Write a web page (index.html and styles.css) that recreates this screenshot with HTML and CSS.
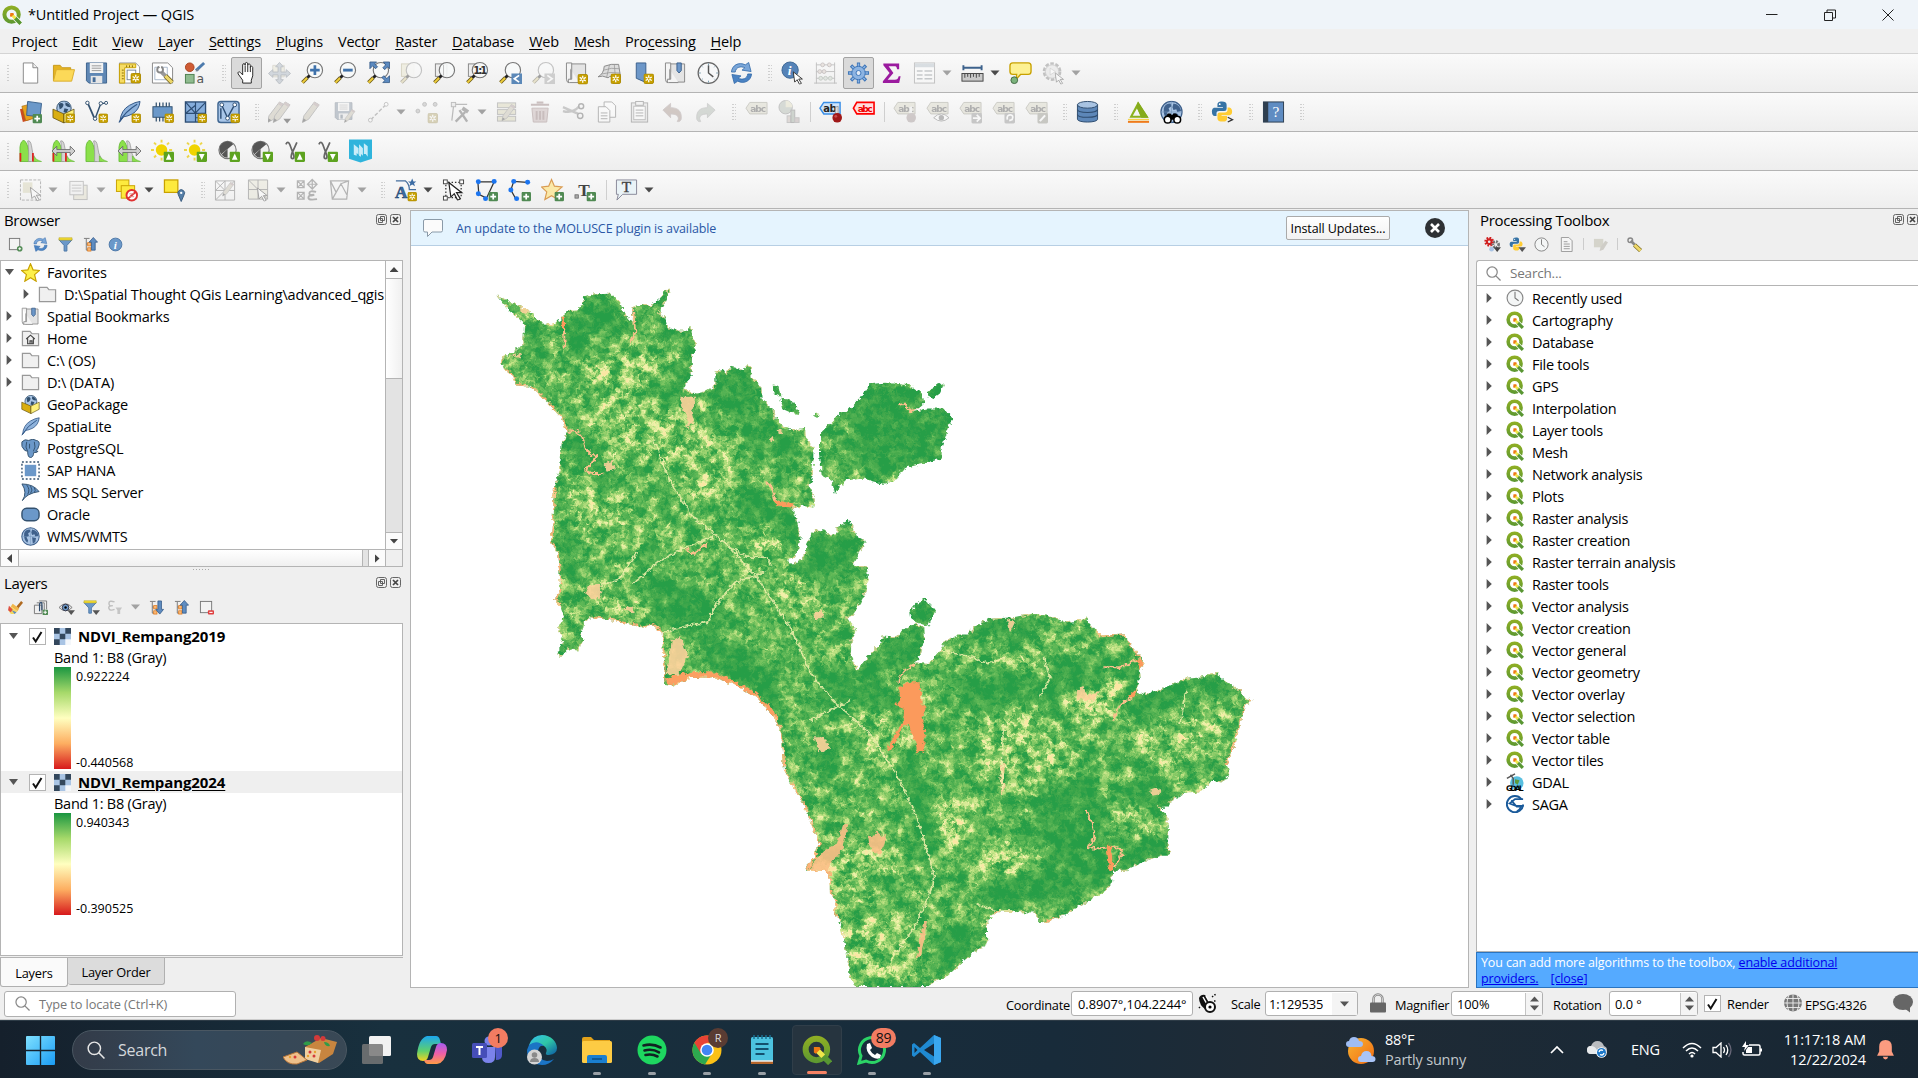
FILE: index.html
```html
<!DOCTYPE html>
<html lang="en">
<head>
<meta charset="utf-8">
<title>*Untitled Project — QGIS</title>
<link rel="stylesheet" href="styles.css">
</head>
<body>
<svg class="grads" aria-hidden="true">
  <defs>
    <linearGradient id="gq" x1="0" y1="0" x2="0" y2="24" gradientUnits="userSpaceOnUse"><stop offset="0" stop-color="#93b023"/><stop offset="1" stop-color="#589632"/></linearGradient>
    <linearGradient id="gwin" x1="0" y1="0" x2="1" y2="1"><stop offset="0" stop-color="#7fe0ff"/><stop offset="1" stop-color="#1a9cf5"/></linearGradient>
    <linearGradient id="gsun" x1="0" y1="0" x2="1" y2="1"><stop offset="0" stop-color="#f7b531"/><stop offset="1" stop-color="#f36a12"/></linearGradient>
    <linearGradient id="gedge" x1="0" y1="0" x2="1" y2="1"><stop offset="0" stop-color="#35c1f1"/><stop offset=".5" stop-color="#2fc7a5"/><stop offset="1" stop-color="#0c59a4"/></linearGradient>
    <linearGradient id="gcopA" x1="0" y1="0" x2="0" y2="1"><stop offset="0" stop-color="#1ca7ee"/><stop offset=".6" stop-color="#5fd06c"/><stop offset="1" stop-color="#f4d21f"/></linearGradient>
    <linearGradient id="gcopB" x1="0" y1="0" x2="0" y2="1"><stop offset="0" stop-color="#a45cf0"/><stop offset=".5" stop-color="#ee5fa8"/><stop offset="1" stop-color="#ff9b45"/></linearGradient>
  </defs>
</svg>
<svg class="defs" aria-hidden="true">
  <!-- small badges -->
  <symbol id="b-new" viewBox="0 0 11 11"><rect x=".5" y=".5" width="10" height="10" rx="1.5" fill="#c8a100" stroke="#ad8b00"/><path d="M5.5 1.8v7.4M2.3 3.6l6.4 3.8M8.7 3.6L2.3 7.4" stroke="#fff" stroke-width="1.3"/><circle cx="5.5" cy="5.5" r="1" fill="#c8a100"/></symbol>
  <symbol id="b-add" viewBox="0 0 10 10"><rect width="10" height="10" rx="1.5" fill="#508a53"/><path d="M5 2v6M2 5h6" stroke="#fff" stroke-width="1.8"/></symbol>
  <symbol id="b-up" viewBox="0 0 11 11"><rect width="11" height="11" rx="1.5" fill="#5da320"/><path d="M5.5 2l3 6.5h-6z" fill="#fff"/></symbol>
  <symbol id="b-dn" viewBox="0 0 11 11"><rect width="11" height="11" rx="1.5" fill="#5da320"/><path d="M5.5 9l3-6.5h-6z" fill="#fff"/></symbol>
  <symbol id="tri" viewBox="0 0 9 6"><path d="M0 .5h9L4.500 5.500z"/></symbol>
  <!-- brand -->
  <symbol id="qgis" viewBox="0 0 24 24"><circle cx="11.500" cy="11.500" r="8.600" fill="none" stroke="url(#gq)" stroke-width="4.800"/><path d="M12 12L23 23" stroke="#fff" stroke-width="6.200"/><path d="M15.500 15.500L22.500 22.500" stroke="#589632" stroke-width="4.400"/><path d="M12.500 12.500L16 16" stroke="#f0e64a" stroke-width="3.600"/><path d="M10 9.500h3.500l1 1.500-3.500 3.500-1.500-1z" fill="#ee7913"/></symbol>
  <symbol id="qgis-dark" viewBox="0 0 24 24"><circle cx="11.500" cy="11.500" r="8.600" fill="none" stroke="url(#gq)" stroke-width="4.800"/><path d="M15.500 15.500L22.500 22.500" stroke="#589632" stroke-width="4.600"/><path d="M12.500 12.500L17 17" stroke="#f0e64a" stroke-width="4.200"/><path d="M9.500 9.500h4.500l1 1.500-4 4-1.500-1z" fill="#ee7913"/></symbol>
  <!-- file toolbar -->
  <symbol id="i-new" viewBox="0 0 24 24"><path d="M4.500 1.500h10l5 5v16h-15z" fill="#fff" stroke="#888"/><path d="M14.500 1.500v5h5" fill="#eee" stroke="#888"/></symbol>
  <symbol id="i-open" viewBox="0 0 24 24"><path d="M1.500 20V4h7l2 2.500h9V10" fill="#e6b422" stroke="#c79a1c"/><path d="M1.500 20.500l3-12h19l-3 12z" fill="#fcd958" stroke="#d9ae2e"/></symbol>
  <symbol id="i-save" viewBox="0 0 24 24"><path d="M1.500 1.500h21v21H4l-2.500-2.500z" fill="#5f87b4" stroke="#3d628c"/><rect x="5" y="1.500" width="14" height="10.500" fill="#f3f3f3"/><path d="M7 4.500h10M7 7h10M7 9.500h10" stroke="#999"/><rect x="6" y="15" width="12" height="7.500" fill="#e6e6e6"/><rect x="8" y="16.500" width="3" height="5" fill="#456c98"/></symbol>
  <symbol id="i-layout" viewBox="0 0 24 24"><path d="M1.500 1.500h17l4 4v17h-21z" fill="#fff" stroke="#999"/><path d="M1.500 2.500h17v4H7v16H1.500z" fill="#f6dc66" stroke="#c8a100"/><path d="M9 4v2M12 4v2M15 4v2M4 9h2M4 12h2M4 15h2M4 18h2" stroke="#8a6d00"/><rect x="9.500" y="9" width="9" height="10" fill="#fff" stroke="#789"/><use href="#b-new" x="13" y="12" width="11" height="11"/></symbol>
  <symbol id="i-laymgr" viewBox="0 0 24 24"><path d="M1.500 1.500h16l5 5v16h-21z" fill="#fff" stroke="#888"/><path d="M4 6h13v13H4z" fill="none" stroke="#a9b8cb"/><path d="M11 11l9 9" stroke="#999" stroke-width="4"/><path d="M15 15l7 7" stroke="#6b5a1a" stroke-width="5"/><path d="M15 15l7 7" stroke="#ecd76b" stroke-width="3.400"/><circle cx="9.500" cy="8.500" r="3" fill="#fff" stroke="#888" stroke-width="2"/><path d="M8 4l2 4 1-4z" fill="#fff"/></symbol>
  <symbol id="i-style" viewBox="0 0 24 24"><circle cx="6" cy="6" r="4.500" fill="#cf5b34" stroke="#a8431f"/><path d="M12.500 9.500L21 1.500" stroke="#4d7bad" stroke-width="3"/><path d="M12 10.500l2-3 1.500 1.500z" fill="#888"/><rect x="1.500" y="13.500" width="9" height="9" fill="#8fbb8f" stroke="#4f8050"/><text x="13" y="22" font-size="13" fill="#555" class="dv">a</text></symbol>
  <symbol id="i-hand" viewBox="0 0 24 24"><path d="M8 22.500v-3L3.300 13c-1-2 1.200-3 2.400-1.500L8 14V3.700c0-2 2.600-2 2.600 0V2.500c0-2 2.700-2 2.700 0V4c0-2 2.700-2 2.700.2V6c.2-1.600 2.500-1.400 2.500.4V15l-1.500 4.500v3z" fill="#fff" stroke="#222"/><path d="M10.600 4v7M13.300 4v7M16 5.500V11" stroke="#222"/></symbol>
  <symbol id="i-panSel" viewBox="0 0 24 24"><path d="M5 4h12v12H5z" fill="#e9e2a9" stroke="#bbb38b"/><path d="M12 1l4 4.500h-2.500V11H19V8.500l4.500 4L19 16.500V14h-5.500v5H16l-4 4.500L8 19h2.500v-5H5v2.500L.5 12.500 5 8.500V11h5.500V5.500H8z" fill="#8fb0d2" stroke="#5d7896" stroke-width="1"/></symbol>
  <symbol id="lens" viewBox="0 0 24 24"><circle cx="14.500" cy="9" r="8" fill="#f7f9fa" fill-opacity=".9" stroke="#777" stroke-width="1.200"/><path d="M9 14.500l-2.500 2.500" stroke="#222" stroke-width="3"/><path d="M6.500 17L1.500 22" stroke="#6e5c16" stroke-width="3.800"/><path d="M6.300 17.200L1.500 22" stroke="#f0cf3c" stroke-width="2"/></symbol>
  <symbol id="i-zin" viewBox="0 0 24 24"><use href="#lens"/><path d="M14.500 4v10M9.500 9h10" stroke="#3f72ab" stroke-width="2.800"/></symbol>
  <symbol id="i-zout" viewBox="0 0 24 24"><use href="#lens"/><path d="M9.500 9h10" stroke="#3f72ab" stroke-width="3"/></symbol>
  <symbol id="i-zfull" viewBox="0 0 24 24"><use href="#lens"/><g fill="#5b8ac0" stroke="#2d5280" stroke-width=".8"><path d="M3 .5h7L8 2.500l3 3L9 7.500 6 4.500l-3 3z"/><path d="M23.500.5v7l-2-2-3 3-2-2 3-3-2.500-3z"/><path d="M23.500 22h-7l2.200-2.200-3.200-3 2-2 3.200 3 2.800-3z"/></g></symbol>
  <symbol id="i-zsel" viewBox="0 0 24 24"><rect x="1.500" y="2.500" width="13" height="13" fill="#efe59a" stroke="#b5a642"/><use href="#lens"/></symbol>
  <symbol id="i-zlay" viewBox="0 0 24 24"><rect x="2.500" y="2.500" width="12" height="13" fill="#eee" stroke="#888"/><use href="#lens"/><path d="M11 3.500v11" stroke="#bbb"/></symbol>
  <symbol id="i-z11" viewBox="0 0 24 24"><rect x="2.500" y="2.500" width="12" height="13" fill="#eee" stroke="#888"/><use href="#lens"/><text x="7.600" y="13" font-size="10.500" font-weight="700" fill="#333" textLength="14" class="dv">1:1</text></symbol>
  <symbol id="i-zlast" viewBox="0 0 24 24"><use href="#lens"/><rect x="13" y="12.500" width="11" height="11" fill="#5b88b8"/><path d="M21 14.500l-5 3.500 5 3.500" fill="none" stroke="#fff" stroke-width="1.800"/></symbol>
  <symbol id="i-znext" viewBox="0 0 24 24"><use href="#lens"/><rect x="13" y="12.500" width="11" height="11" fill="#999"/><path d="M16 14.500l5 3.500-5 3.500" fill="none" stroke="#fff" stroke-width="1.800"/></symbol>
  <symbol id="i-map" viewBox="0 0 24 24"><path d="M6 2.500h15.500v19H6z" fill="#e4e4e4" stroke="#888"/><path d="M1.500 1.500H7v17H3.500v4M1.500 1.500v17q0 3.500 3 3.500H15" fill="#f4f4f4" stroke="#888"/></symbol>
  <symbol id="i-nmap" viewBox="0 0 24 24"><use href="#i-map"/><use href="#b-new" x="13" y="13" width="11" height="11"/></symbol>
  <symbol id="i-n3d" viewBox="0 0 24 24"><path d="M0 16Q6 13 6.500 5q7-3 15-2l2 13q-11-2-13 1-6-3-10.500-1z" fill="#ddd" stroke="#888"/><path d="M6 9q8-3 16-1.500M4 13q8-2.500 19-1M12 3.500l-3 13M17 3l1 12" stroke="#999" fill="none" stroke-width=".8"/><use href="#b-new" x="13" y="12.500" width="11" height="11"/></symbol>
  <symbol id="i-nbook" viewBox="0 0 24 24"><path d="M5.500 1.500h10v21l-2-1.500-8-3.500z" fill="#6d97c8" stroke="#3b608c"/><use href="#b-new" x="13" y="12.500" width="11" height="11"/></symbol>
  <symbol id="i-books" viewBox="0 0 24 24"><use href="#i-map"/><path d="M13.500 1.500h4.500v8l-2.300 2.500-2.200-2.500z" fill="#6d97c8" stroke="#3b608c"/></symbol>
  <symbol id="i-clock" viewBox="0 0 24 24"><circle cx="12" cy="12" r="10.800" fill="#f7f8f9" stroke="#666" stroke-width="1.300"/><path d="M12 4v8l5 4" stroke="#555" fill="none" stroke-width="1.500"/><path d="M12 2v2M12 20v2M2 12h2M20 12h2M5 5l1 1M19 5l-1 1M5 19l1-1M19 19l-1-1" stroke="#79a"/></symbol>
  <symbol id="i-refresh" viewBox="0 0 24 24"><path d="M1.500 11C2 4 9 0 16 3.500L19.500 1l2.500 9.500-9.500-1.500 3-2.500C11 4.500 6 6 5.500 11z" fill="#7aa6d8" stroke="#2f67a8" stroke-width=".8"/><path d="M22.500 13C22 20 15 24 8 20.500L4.500 23 2 13.500l9.500 1.500-3 2.500c4.500 2 9.500.5 10-4.500z" fill="#4b83c3" stroke="#2f67a8" stroke-width=".8"/></symbol>
  <symbol id="arrowcur" viewBox="0 0 12 14"><path d="M.8.8l9.500 7.500H6.500l2.800 4.500-2 1L4.800 9l-2.500 2.500z" fill="#fff" stroke="#222" stroke-width=".9"/></symbol>
  <symbol id="i-ident" viewBox="0 0 24 24"><circle cx="9.500" cy="9" r="8.500" fill="#5583b8" stroke="#3e6794"/><text x="7" y="14.500" font-size="14" font-weight="700" font-style="italic" fill="#fff" class="sf">i</text><use href="#arrowcur" x="12" y="10" width="12" height="14"/></symbol>
  <symbol id="i-abacus" viewBox="0 0 24 24"><path d="M2.500 1v22M21.500 1v22M0 22.500h24M2 3.500h20M2 10.500h20M2 17.500h20" stroke="#777" fill="none"/><g fill="#e6c4ae" stroke="#977"><circle cx="9" cy="3.500" r="2"/><circle cx="16" cy="3.500" r="2"/><circle cx="6" cy="10.500" r="2"/><circle cx="10.500" cy="10.500" r="2"/></g><g fill="#bcd3bb" stroke="#797"><circle cx="7" cy="17.500" r="2"/><circle cx="12" cy="17.500" r="2"/><circle cx="17" cy="17.500" r="2"/></g></symbol>
  <symbol id="i-gear" viewBox="0 0 24 24"><path d="M12 1v22M1 12h22M4.200 4.200l15.600 15.600M19.800 4.200L4.200 19.800" stroke="#3d75b8" stroke-width="3.400"/><path d="M12 2v20M2 12h20M5 5l14 14M19 5L5 19" stroke="#8db4e2" stroke-width="1.600"/><circle cx="12" cy="12" r="7" fill="#8db4e2" stroke="#3d75b8"/><circle cx="12" cy="12" r="2.600" fill="#e4ecf6" stroke="#3d75b8"/></symbol>
  <symbol id="i-sigma" viewBox="0 0 24 24"><path d="M3.500 2h16.500v6h-2.200c-.3-2.500-1-3-3-3H9l5 7-6 7h7.500c2.500 0 3.300-.8 4-3.500h2L20 22.500H3v-2L10 12 3.500 4z" fill="#9b1b9f"/></symbol>
  <symbol id="i-table" viewBox="0 0 24 24"><rect x="1.500" y="1.500" width="21" height="21" fill="#fff" stroke="#777"/><rect x="2" y="2" width="20" height="4" fill="#9fbbd8"/><path d="M4 10h6M12 10h8M4 14h6M12 14h8M4 18h6M12 18h8" stroke="#7a8a99" stroke-width="1.500"/></symbol>
  <symbol id="i-measure" viewBox="0 0 24 24"><path d="M2 6.500h20M2.500 4v5M21.500 4v5" stroke="#3d628c" stroke-width="2"/><rect x="1" y="12.500" width="22" height="8" fill="#c9c9c9" stroke="#444"/><path d="M4 13v4M7 13v3M10 13v4M13 13v3M16 13v4M19 13v3" stroke="#444"/></symbol>
  <symbol id="i-tip" viewBox="0 0 24 24"><path d="M4 1.500h16q3 0 3 3v6q0 3-3 3h-8l-4.500 5 .5-5H4q-3 0-3-3v-6q0-3 3-3z" fill="#fdf193" stroke="#c8a100" stroke-width="1.400"/><circle cx="5.500" cy="19.500" r="3.500" fill="#7bb37d" stroke="#446b45"/></symbol>
  <symbol id="i-action" viewBox="0 0 24 24"><circle cx="10.500" cy="10.500" r="8" fill="none" stroke="#777" stroke-width="3.500" stroke-dasharray="3.500 1.600"/><circle cx="10.500" cy="10.500" r="7" fill="#e0e0e0" stroke="#999"/><path d="M8.500 7v7l5.500-3.500z" fill="#fff" stroke="#888" stroke-width=".6"/><use href="#arrowcur" x="13" y="11" width="11" height="13"/></symbol>
  <!-- data source toolbar -->
  <symbol id="i-dsm" viewBox="0 0 24 24"><path d="M1 9l8-2 3 13-8 2.500z" fill="#cc4a20"/><path d="M3 6l12-3 3 15-11 3z" fill="#e8a21c" stroke="#a86c10" stroke-width=".7"/><path d="M9 1l14.500 2-1.500 14-14-1.500z" fill="#6b98c9" stroke="#3b628e"/><use href="#b-add" x="14" y="14" width="10" height="10"/></symbol>
  <symbol id="i-gpkg0" viewBox="0 0 24 24"><circle cx="12.500" cy="8" r="7.500" fill="#a8c4e4" stroke="#32506f"/><path d="M7 4q3-3 5 0 0 4-4 5zM14 2q5 1 5 5-3 0-5-2zM13 8l4 1-2 4-3-1z" fill="#32506f"/><path d="M1 9l11.500 5v9.500L1 18z" fill="#d9ae10" stroke="#5e4d0c" stroke-width=".8"/><path d="M12.500 14L23 9v9l-10.500 5.500z" fill="#fdf07a" stroke="#5e4d0c" stroke-width=".8"/></symbol>
  <symbol id="i-gpkg" viewBox="0 0 24 24"><use href="#i-gpkg0"/><use href="#b-new" x="14" y="13.500" width="10" height="10"/></symbol>
  <symbol id="i-shp" viewBox="0 0 24 24"><path d="M3 3l7 16" fill="none" stroke="#33516f" stroke-width="1.800"/><path d="M10.500 19l6-16h6" fill="none" stroke="#33516f" stroke-width="1.500"/><g fill="#fff" stroke="#33516f"><circle cx="2.500" cy="2.500" r="1.800"/><circle cx="10.500" cy="19" r="1.800"/><circle cx="16.500" cy="3" r="1.800"/><circle cx="22" cy="2.500" r="1.600"/></g><use href="#b-new" x="14" y="13.500" width="10" height="10"/></symbol>
  <symbol id="i-feather" viewBox="0 0 24 24"><path d="M2 22Q3 10 12 5q6-3.500 11-4-1 9-8 13-5 2.500-9 3z" fill="#8fb3dc" stroke="#2f5585"/><path d="M1 23Q8 11 20 4" stroke="#2f5585" fill="none" stroke-width="1.200"/></symbol>
  <symbol id="i-spl" viewBox="0 0 24 24"><use href="#i-feather"/><use href="#b-new" x="14" y="13.500" width="10" height="10"/></symbol>
  <symbol id="i-mem" viewBox="0 0 24 24"><path d="M5.500 2v20M9 2v20M12.500 2v20M16 2v20M19 2v20" stroke="#33516f" stroke-width="1.300"/><rect x="2" y="6.500" width="20" height="11" fill="#6b98c9" stroke="#33516f"/><use href="#b-new" x="14" y="13.500" width="10" height="10"/></symbol>
  <symbol id="i-mesh" viewBox="0 0 24 24"><rect x="1.500" y="1.500" width="21" height="21" fill="#86addb" stroke="#2d4d73" stroke-width="1.400"/><path d="M1.500 13.500h21M12 1.500v21M1.500 1.500l10.500 12M12 13L22.500 2M1.500 13.500L12 5M12 18h10" stroke="#2d4d73" stroke-width="1.200"/><use href="#b-new" x="14" y="13.500" width="10" height="10"/></symbol>
  <symbol id="i-virt" viewBox="0 0 24 24"><rect x="1" y="1" width="22" height="22" rx="3" fill="#a9c6e8" stroke="#3f6590" stroke-width="1.500"/><path d="M5 5l6 13L18 5M4 19V8" fill="none" stroke="#2d4d73" stroke-width="1.500"/><g fill="#fff" stroke="#2d4d73"><circle cx="5" cy="4.500" r="2"/><circle cx="11" cy="18.500" r="2"/><circle cx="18.500" cy="4.500" r="2"/></g><use href="#b-new" x="14" y="13.500" width="10" height="10"/></symbol>
  <symbol id="pencil" viewBox="0 0 24 24"><path d="M1.500 23l1.500-7L14 1.500l5 3L8 19.500z" fill="#c9b98a" stroke="#777"/><path d="M1.500 23l1-4.500 3 2z" fill="#333"/><path d="M14 1.500l5 3-1.500 2.500-5.200-3.300z" fill="#b88"/></symbol>
  <symbol id="i-pencils" viewBox="0 0 24 24"><use href="#pencil" x="-2"/><use href="#pencil" x="4"/><path d="M16 19h8l-4 5z" fill="#111"/></symbol>
  <symbol id="i-savee" viewBox="0 0 24 24"><use href="#i-save" width="20" height="22"/><use href="#pencil" x="10" y="8" width="15" height="16"/></symbol>
  <symbol id="i-line" viewBox="0 0 24 24"><path d="M4 20L20 4" stroke="#777" stroke-width="1.500" stroke-dasharray="4 2"/><circle cx="3.500" cy="20.500" r="2" fill="#fff" stroke="#777"/><circle cx="20" cy="4" r="2" fill="#fff" stroke="#777"/></symbol>
  <symbol id="i-pts" viewBox="0 0 24 24"><g fill="#aaa" stroke="#777"><circle cx="3" cy="11" r="2"/><circle cx="10" cy="4" r="2"/><circle cx="21" cy="4" r="2"/></g><use href="#b-new" x="13" y="13" width="11" height="11"/></symbol>
  <symbol id="i-vert" viewBox="0 0 24 24"><path d="M4 21L6 4h14" stroke="#666" fill="none" stroke-width="1.300"/><rect x="3.500" y="2" width="4.500" height="4.500" fill="#ddd" stroke="#666"/><path d="M8 22L18 12M12 10l8 12" stroke="#555" stroke-width="2.500"/><path d="M15 8l6 4" stroke="#555" stroke-width="4"/></symbol>
  <symbol id="i-multi" viewBox="0 0 24 24"><g fill="#ddd27c" stroke="#777"><rect x="1.500" y="2.500" width="19" height="5"/><rect x="1.500" y="9.500" width="19" height="5"/><rect x="1.500" y="16.500" width="19" height="5"/></g><use href="#pencil" x="5" y="2" width="19" height="21"/></symbol>
  <symbol id="i-trash" viewBox="0 0 24 24"><path d="M3 8h17l-1.500 14.500h-14z" fill="#d6a3a3" stroke="#a66"/><path d="M2 4.500h19M8 2h7M8 11v9M11.500 11v9M15 11v9" stroke="#a66" stroke-width="2"/></symbol>
  <symbol id="i-cut" viewBox="0 0 24 24"><path d="M1 7l16 7M1 11q10 3 17-5" stroke="#888" stroke-width="2.500" fill="none"/><circle cx="20" cy="6" r="2.600" fill="none" stroke="#555" stroke-width="1.500"/><circle cx="19" cy="16" r="2.800" fill="none" stroke="#555" stroke-width="1.500"/></symbol>
  <symbol id="i-copy" viewBox="0 0 24 24"><path d="M9.500 1.500h8l4 4v12h-12z" fill="#fff" stroke="#555"/><path d="M3.500 6.500h8l4 4v12h-12z" fill="#fff" stroke="#555"/><path d="M6 13h7M6 16h7M6 19h7" stroke="#555"/></symbol>
  <symbol id="i-paste" viewBox="0 0 24 24"><rect x="3.500" y="2.500" width="17" height="20" fill="#ddd" stroke="#555"/><rect x="6" y="6" width="12" height="14" fill="#fff" stroke="#777"/><rect x="8" y="1" width="8" height="4" fill="#eee" stroke="#555"/><path d="M8 10h8M8 13h8M8 16h8" stroke="#555"/></symbol>
  <symbol id="i-undo" viewBox="0 0 24 24"><path d="M2 10l8-7v4.500c8 0 12 4 11 12-1 3-3 2.500-4 2.500 3-5 0-8-7-8v4z" fill="#b9836b" stroke="#a88"/></symbol>
  <symbol id="i-redo" viewBox="0 0 24 24"><path d="M22 10l-8-7v4.500C6 7.500 2 11.500 3 19.500c1 3 3 2.500 4 2.500-3-5 0-8 7-8v4z" fill="#9bb49b" stroke="#999"/></symbol>
  <symbol id="tag" viewBox="0 0 24 24"><path d="M1 8l4-6h18v12H5z" fill="#d8d3a4" stroke="#8f8c6a"/><text x="5.500" y="12" font-size="9.500" font-weight="700" fill="#444" textLength="16" class="dv">abc</text></symbol>
  <symbol id="i-diag" viewBox="0 0 24 24"><circle cx="8" cy="7" r="7" fill="#9db59b" stroke="#777"/><path d="M8 7V0a7 7 0 0 1 7 7z" fill="#e6dc8a"/><rect x="9.500" y="16" width="4" height="7" fill="#d8b0a0" stroke="#888"/><rect x="13.500" y="10" width="4" height="13" fill="#8aaa8a" stroke="#666"/><rect x="17.500" y="18" width="4.500" height="5" fill="#c59a9a" stroke="#888"/></symbol>
  <symbol id="i-tagpin" viewBox="0 0 24 24"><path d="M1 8l4-6h17v12H5z" fill="#cfe4fb" stroke="#3a8ee6" stroke-width="1.500"/><text x="4.500" y="12" font-size="10.500" font-weight="700" fill="#222" class="dv">ab</text><path d="M17 7l3-1v12h-3z" fill="#ddd" stroke="#888" stroke-width=".7"/><circle cx="19" cy="18" r="5" fill="#a01818"/><circle cx="17.500" cy="16.500" r="1.500" fill="#c94a4a"/></symbol>
  <symbol id="i-tagred" viewBox="0 0 24 24"><path d="M1.500 8l3.500-6h18v12H5z" fill="#fdd" stroke="#f00" stroke-width="1.700"/><text x="6" y="12" font-size="9.500" font-weight="700" fill="#e00" textLength="15" class="dv">abc</text></symbol>
  <symbol id="i-tagp" viewBox="0 0 24 24"><use href="#tag"/><path d="M17 7l3-1v12h-3z" fill="#eee"/><circle cx="19" cy="18" r="5" fill="#a88"/></symbol>
  <symbol id="i-tageye" viewBox="0 0 24 24"><use href="#tag"/><path d="M8 18q8-8 16 0-8 7-16 0z" fill="#fff" stroke="#666"/><circle cx="16" cy="18" r="2.800" fill="#666"/></symbol>
  <symbol id="i-tagmv" viewBox="0 0 24 24"><use href="#tag"/><rect x="13" y="13" width="11" height="11" rx="1.500" fill="#888"/><path d="M14.500 18.500h7M18.500 15l3.500 3.500-3.500 3.500" fill="none" stroke="#fff" stroke-width="1.800"/></symbol>
  <symbol id="i-tagrot" viewBox="0 0 24 24"><use href="#tag"/><rect x="13" y="13" width="11" height="11" rx="1.500" fill="#888"/><path d="M16 20q-1-5 3-5t2 5l-3 1" fill="none" stroke="#fff" stroke-width="1.800"/></symbol>
  <symbol id="i-taged" viewBox="0 0 24 24"><use href="#tag"/><rect x="13" y="13" width="11" height="11" rx="1.500" fill="#8a8a70"/><path d="M15.500 21.500l5.500-6" stroke="#fff" stroke-width="2.200"/></symbol>
  <symbol id="i-db" viewBox="0 0 24 24"><path d="M1.500 4.500v15c0 4 21 4 21 0v-15z" fill="#5d87b8" stroke="#2f4c6e"/><ellipse cx="12" cy="4.500" rx="10.500" ry="3.500" fill="#a8c3e2" stroke="#2f4c6e"/><path d="M1.500 9.500c0 4 21 4 21 0M1.500 14.500c0 4 21 4 21 0" fill="none" stroke="#2f4c6e" stroke-width="1.200"/></symbol>
  <symbol id="i-grass" viewBox="0 0 24 24"><path d="M11.500 1L22.500 18H2.500zM10.500 8L6 16h8z" fill="#8ab11d" fill-rule="evenodd"/><path d="M11.500 1L22.500 18H15L10 7z" fill="#85ab1b"/><path d="M1 19.900h22" stroke="#f4d34a" stroke-width="1.500"/><path d="M1 22.300h22" stroke="#ef7a1a" stroke-width="2"/></symbol>
  <symbol id="globe" viewBox="0 0 24 24"><circle cx="12" cy="12" r="11" fill="#a9c4e4" stroke="#3f618c" stroke-width="1.300"/><path d="M4 8q1-5 7-5l1 3-3 2 1 3-3 2 2 4-1 3Q3 16 4 8zM14 3q7 1 8 8l-4 1-1-3-3 1-1-3zM14 13l5 1-1 5-3 2z" fill="#3f618c"/><path d="M1 12h22M12 1v22" stroke="#7394ba" stroke-width=".6"/></symbol>
  <symbol id="i-msearch" viewBox="0 0 24 24"><use href="#globe"/><path d="M5 20l3-6.500h3l1.500 2 1.500-2h3l4 6.500z" fill="#000"/><circle cx="8" cy="20" r="3.500" fill="#fff" stroke="#000" stroke-width="1.600"/><circle cx="18" cy="20" r="3.500" fill="#fff" stroke="#000" stroke-width="1.600"/></symbol>
  <symbol id="python" viewBox="0 0 24 24"><path d="M12 1C8 1 7 2.500 7 4.500V7h6v1H4C1.500 8 1 10.500 1 12.500S2 17 4 17h2v-3q0-2.500 3-2.500h5.500q2.500 0 2.500-2.500V4.500C17 2 15 1 12 1z" fill="#3673a5"/><path d="M12.500 23c4 0 5-1.500 5-3.500V17h-6v-1H20c2.500 0 3-2 3-4s-1-4.500-3-4.500h-2v2.500q0 3-3 3H9.500Q7 13 7 15.500v4C7 22 9.500 23 12.500 23z" fill="#fc3"/><circle cx="9.500" cy="4" r="1" fill="#fff"/></symbol>
  <symbol id="i-py" viewBox="0 0 24 24"><use href="#python" width="23" height="23"/><path d="M17.500 17.500l5 2.500-5 2.500" fill="none" stroke="#333" stroke-width="1.300"/></symbol>
  <symbol id="i-help" viewBox="0 0 24 24"><rect x="1.500" y="1.500" width="21" height="21" fill="#5f8cc2" stroke="#2c3e50"/><rect x="1.500" y="1.500" width="5" height="21" fill="#2f3f50"/><text x="11" y="17.500" font-size="16" fill="#fff" class="sf">?</text></symbol>
  <!-- raster toolbar -->
  <symbol id="i-h" viewBox="0 0 24 24"><path d="M1 23V8Q2 .5 5.500 1q3.500 3 4.500 11l2 11z" fill="#8be04a" stroke="#5cb52a" stroke-width=".8"/><path d="M9 1.500q3-1 4 5 1 9 3.500 12.500L18 23h-8Q10.500 8 9 1.500z" fill="#d4d4d4" stroke="#999" stroke-width=".8"/><path d="M15 17q3 5 8.500 6H15z" fill="#8be04a" stroke="#5cb52a" stroke-width=".6"/></symbol>
  <symbol id="i-h1" viewBox="0 0 24 24"><use href="#i-h"/><path d="M1.500 14v9M14.500 14v9" stroke="#e02020" stroke-width="1.800"/></symbol>
  <symbol id="harr" viewBox="0 0 24 24"><path d="M0 12l5-5v3.500h14V7l5 5-5 5v-3.500H5V17z" fill="#d0d0d0" stroke="#666" stroke-width=".9"/></symbol>
  <symbol id="i-h2" viewBox="0 0 24 24"><use href="#i-h1"/><use href="#harr"/></symbol>
  <symbol id="i-h4" viewBox="0 0 24 24"><use href="#i-h"/><use href="#harr"/></symbol>
  <symbol id="sun" viewBox="0 0 24 24"><path d="M11 0v22M0 11h22M3.200 3.200l15.600 15.600M18.800 3.200L3.200 18.800" stroke="#ecd548" stroke-width="2"/><circle cx="11" cy="11" r="8" fill="#f6f6f6"/><circle cx="11" cy="11" r="6" fill="#f0d400"/></symbol>
  <symbol id="i-sunu" viewBox="0 0 24 24"><use href="#sun"/><use href="#b-up" x="13" y="12.500" width="11" height="11"/></symbol>
  <symbol id="i-sund" viewBox="0 0 24 24"><use href="#sun"/><use href="#b-dn" x="13" y="12.500" width="11" height="11"/></symbol>
  <symbol id="con" viewBox="0 0 24 24"><circle cx="11" cy="11" r="9" fill="#f0f0f0" stroke="#777" stroke-width="1.200"/><path d="M4.500 15.500A8 8 0 0 1 17 5z" fill="#555"/><path d="M4.800 15.800A8 8 0 0 0 11 19V10z" fill="#555"/></symbol>
  <symbol id="i-conu" viewBox="0 0 24 24"><use href="#con"/><use href="#b-up" x="13" y="12.500" width="11" height="11"/></symbol>
  <symbol id="i-cond" viewBox="0 0 24 24"><use href="#con"/><use href="#b-dn" x="13" y="12.500" width="11" height="11"/></symbol>
  <symbol id="gam" viewBox="0 0 24 24"><path d="M3 5q2-4 4 0l3 8L14.500 3M10 12q-3 8 0 8t0-7" fill="none" stroke="#666" stroke-width="1.800"/></symbol>
  <symbol id="i-gamu" viewBox="0 0 24 24"><use href="#gam"/><use href="#b-up" x="12" y="12.500" width="11" height="11"/></symbol>
  <symbol id="i-gamd" viewBox="0 0 24 24"><use href="#gam"/><use href="#b-dn" x="12" y="12.500" width="11" height="11"/></symbol>
  <symbol id="i-hcmgis" viewBox="0 0 24 24"><path d="M0 0h24v20l-12 4-12-4z" fill="#2fb4dc"/><path d="M5 16V5l5 4v7l-2-2v3zM10.500 17V5l4 4v8l-2-2v3zM15.500 15V4l4 3v11l-2-3z" fill="#c9edf9"/></symbol>
  <!-- selection / mesh / annotation toolbar -->
  <symbol id="i-sel" viewBox="0 0 24 24"><rect x="1.500" y="1.500" width="21" height="21" fill="none" stroke="#555" stroke-dasharray="3 1.500"/><rect x="4" y="4" width="10" height="11" fill="#d9ce76"/><use href="#arrowcur" x="11" y="8" width="13" height="16"/></symbol>
  <symbol id="i-selv" viewBox="0 0 24 24"><rect x="7" y="7" width="14" height="15" fill="#e4dca0" stroke="#777"/><rect x="3" y="3" width="14" height="14" fill="#eee" stroke="#777"/><path d="M5 7h10M5 10h10M5 13h10" stroke="#888"/></symbol>
  <symbol id="i-desel" viewBox="0 0 24 24"><rect x="1.500" y="1.500" width="13" height="12" fill="#fdea3e" stroke="#c8a100"/><rect x="6.500" y="7.500" width="14" height="13" fill="#fdea3e" stroke="#c8a100"/><circle cx="17.500" cy="17.500" r="5.500" fill="#fff" stroke="#e03030" stroke-width="2"/><path d="M13.500 21l8-7" stroke="#e03030" stroke-width="2"/><path d="M15 16h5M15 19h5" stroke="#d88"/></symbol>
  <symbol id="i-selloc" viewBox="0 0 24 24"><rect x="1.500" y="1.500" width="14" height="13" fill="#fdea3e" stroke="#c8a100" stroke-width="1.300"/><path d="M19 24l-3-7a3.500 3.500 0 1 1 6 0z" fill="#557fa8" stroke="#3b5c80"/><circle cx="19" cy="15" r="1.200" fill="#fff"/></symbol>
  <symbol id="i-me1" viewBox="0 0 24 24"><path d="M1.500 2.500h20v20h-20zM1.500 12.500h20M11.500 2.500v20M1.500 2.500l10 10M11.500 2.500l-10 10M1.500 22.500l10-10M11.500 12.500l10-10" stroke="#555" fill="none"/><use href="#pencil" x="8" y="0" width="16" height="22"/></symbol>
  <symbol id="i-me2" viewBox="0 0 24 24"><path d="M1.500 1.500h20v20h-20z" fill="#e8e2b4"/><path d="M1.500 1.500h20v20h-20zM1.500 11.500h20M11.500 1.500v20M1.500 1.500l20 20" stroke="#555" fill="none"/><use href="#arrowcur" x="10" y="9" width="13" height="15"/></symbol>
  <symbol id="i-me3" viewBox="0 0 24 24"><path d="M2.500 2.500h7v7h-7zM2.500 2.500l7 7M9.500 2.500l-7 7M2.500 14.500h7v7h-7zM2.500 14.500l7 7M9.500 14.500l-7 7M18 1l5 5-5 5-5-5zM13 6h10M18 1v10" stroke="#555" fill="none" stroke-width="1.300"/><path d="M22 14q-7-2-7 1.500t5 1.500q-6 0-6 3t9 1.500" stroke="#555" fill="none" stroke-width="2"/></symbol>
  <symbol id="i-me4" viewBox="0 0 24 24"><path d="M2.500 2.500h19l-2 19h-15zM2.500 2.500l6 12 5-9 7 13M4.500 21.500l4-7M13.500 5.500l8-3" stroke="#555" fill="none" stroke-width="1.300"/></symbol>
  <symbol id="i-ann" viewBox="0 0 24 24"><path d="M2 2.500h10q4 3 4 9h7" fill="none" stroke="#456f9e" stroke-width="1.300"/><text x="1" y="20" font-size="18" font-weight="700" fill="#3c6ca3" stroke="#22466f" stroke-width=".6" class="sf">A</text><path d="M19 0l1.300 3h3l-2.400 2 1 3-2.900-1.800L16 8l1-3-2.400-2h3z" fill="#3c6ca3"/><use href="#b-new" x="14" y="14" width="10" height="10"/></symbol>
  <symbol id="i-annsel" viewBox="0 0 24 24"><path d="M3 4h17M3 20h17M4 3v17M20 3v17" stroke="#333" stroke-width="1.300" stroke-dasharray="1.500 2"/><g fill="#fff" stroke="#444"><rect x="1.500" y="1.500" width="4" height="4"/><rect x="18.500" y="1.500" width="4" height="4"/><rect x="1.500" y="18.500" width="4" height="4"/></g><use href="#arrowcur" x="6" y="3" width="17" height="20"/></symbol>
  <symbol id="i-poly" viewBox="0 0 24 24"><path d="M3 3.500h17l-8 17-8-4z" fill="none" stroke="#333" stroke-width="1.300"/><g fill="#1c75f0"><circle cx="3.500" cy="3.500" r="2.600"/><circle cx="20" cy="3" r="2.600"/><circle cx="3.500" cy="16" r="2.600"/><circle cx="11" cy="21" r="2.600"/></g><use href="#b-add" x="14" y="14" width="10" height="10"/></symbol>
  <symbol id="i-pline" viewBox="0 0 24 24"><path d="M20 4L6 3l-3 9 5 9" fill="none" stroke="#333" stroke-width="1.300"/><g fill="#1c75f0"><circle cx="6" cy="3" r="2.600"/><circle cx="20.500" cy="4" r="2.600"/><circle cx="3" cy="12" r="2.600"/><circle cx="9" cy="21" r="2.600"/></g><use href="#b-add" x="14" y="14" width="10" height="10"/></symbol>
  <symbol id="i-star" viewBox="0 0 24 24"><path d="M11 1l3 7 8 .8-6 5.200 1.800 8L11 18l-7 4 2-8L.5 8.800 8 8z" fill="#fbe9a8" stroke="#d99b52" stroke-width="1.200"/><use href="#b-add" x="14" y="14" width="10" height="10"/></symbol>
  <symbol id="i-txt" viewBox="0 0 24 24"><text x="4.500" y="18" font-size="18" font-weight="700" fill="#444" class="sf">T</text><rect x="1" y="17" width="3.500" height="3.500" fill="#aaa" stroke="#666" stroke-width=".8"/><use href="#b-add" x="13" y="14" width="10" height="10"/></symbol>
  <symbol id="i-callout" viewBox="0 0 24 24"><path d="M1.500 1.500h21v15H8l-6 6 1.500-6h-2z" fill="#eaf3f7" stroke="#889"/><text x="7" y="14.500" font-size="16" fill="#444" stroke="#444" stroke-width=".4" class="sf">T</text></symbol>
  <!-- panels -->
  <symbol id="i-addp" viewBox="0 0 16 16"><rect x="1.500" y="1.500" width="11" height="12" fill="#f3f3f3" stroke="#777"/><circle cx="12.500" cy="12.500" r="3" fill="#508a53"/><path d="M12.500 11v3M11 12.500h3" stroke="#fff"/></symbol>
  <symbol id="i-filt" viewBox="0 0 16 16"><path d="M1 3h14l-5.500 6v6h-3V9z" fill="#6b98c9" stroke="#4b76a6"/><path d="M1 .8h14v2.500H1z" fill="#f2dc2f" stroke="#b9a52c" stroke-width=".6"/></symbol>
  <symbol id="tree" viewBox="0 0 16 16"><path d="M1 1.500h6M3.500 2v12h3M3.500 7.500H6" stroke="#777" fill="none"/><rect x="5" y="6" width="3.500" height="3.500" fill="#f8b878" stroke="#e07818" stroke-width=".8"/><rect x="5" y="11.500" width="3.500" height="3.500" fill="#f8b878" stroke="#e07818" stroke-width=".8"/></symbol>
  <symbol id="i-coll" viewBox="0 0 16 16"><use href="#tree"/><path d="M11 .5l4.500 5h-2.500V14H9V5.500H6.500z" fill="#5f8cc0" stroke="#2f5585" stroke-width=".8"/></symbol>
  <symbol id="i-exp" viewBox="0 0 16 16"><use href="#tree"/><path d="M11.500 15l4-5h-2.200V1H9.500v9H7.200z" fill="#5f8cc0" stroke="#2f5585" stroke-width=".8"/></symbol>
  <symbol id="i-info" viewBox="0 0 16 16"><circle cx="8" cy="8" r="6.800" fill="#6b98c9" stroke="#4b76a6"/><text x="6" y="12.500" font-size="12" font-style="italic" font-weight="700" fill="#fff" class="sf">i</text></symbol>
  <symbol id="i-brush" viewBox="0 0 16 16"><path d="M9 7l5-6 2 2-5 6z" fill="#b06a20"/><path d="M5 4l7 5-2 3-7-5z" fill="#f0b64a"/><path d="M3 7l7 5-3 3H3l-2-3z" fill="#f4d760"/><path d="M1 6l4 4-2 3-3-2z" fill="#e05040"/><path d="M4 11l5 2-2 2z" fill="#5b8ac0"/></symbol>
  <symbol id="i-grp" viewBox="0 0 16 16"><path d="M1.500 5.500h8v9h-8zM4 3h8v9M6.500 1h8v9" fill="none" stroke="#777"/><path d="M7 12V4q2-3 2.500 0v7" fill="none" stroke="#2f4c6e" stroke-width="1.300"/><use href="#b-add" x="10" y="10" width="6" height="6"/></symbol>
  <symbol id="i-eye" viewBox="0 0 18 16"><path d="M1 8q7-8 14 0-7 7-14 0z" fill="#e6e6e6" stroke="#777"/><circle cx="8" cy="8" r="3.500" fill="#6b98c9" stroke="#334"/><circle cx="8" cy="8" r="1.300"/><path d="M10 11h8l-4 5z" fill="#555"/></symbol>
  <symbol id="i-filt2" viewBox="0 0 18 16"><use href="#i-filt" width="15" height="15"/><path d="M10 11h8l-4 5z" fill="#555"/></symbol>
  <symbol id="i-eps" viewBox="0 0 16 16"><path d="M7 2Q1 0 1 3.500T5 6Q0 6 1 9t6 1" fill="none" stroke="#777" stroke-width="1.500"/><path d="M8 8h7l-2 3v4h-3v-4z" fill="#888"/></symbol>
  <symbol id="i-rem" viewBox="0 0 16 16"><rect x="1.500" y="1.500" width="12" height="12" fill="#f3f3f3" stroke="#777"/><rect x="9.500" y="11" width="6.500" height="4.500" rx="1" fill="#e04040"/><path d="M11 13.200h3.500" stroke="#fff" stroke-width="1.200"/></symbol>
  <symbol id="i-gears" viewBox="0 0 18 16"><circle cx="5.500" cy="5" r="4" fill="none" stroke="#d02020" stroke-width="2.500" stroke-dasharray="1.800 1.300"/><circle cx="5.500" cy="5" r="2.500" fill="none" stroke="#d02020" stroke-width="2.200"/><circle cx="12.500" cy="8" r="3" fill="none" stroke="#777" stroke-width="3" stroke-dasharray="1.800 1"/><circle cx="8" cy="13" r="2.500" fill="#a9c4e4"/><path d="M10 11h8l-4 5z" fill="#444"/></symbol>
  <symbol id="i-py2" viewBox="0 0 18 16"><use href="#python" width="15" height="15"/><path d="M10 11h8l-4 5z" fill="#555"/></symbol>
  <symbol id="i-doc" viewBox="0 0 16 16"><path d="M2.500.5h8l3.500 3.500v11.500H2.500z" fill="#f5f5f5" stroke="#999"/><path d="M5 5h4M5 7.500h6.500M5 10h6.500M5 12.500h6.500" stroke="#999"/></symbol>
  <symbol id="i-edres" viewBox="0 0 16 16"><rect x="1" y="2" width="10" height="9" fill="#b5ae7a"/><path d="M7 15l1-4 5-7 3 1.500-5 8z" fill="#a89c78"/></symbol>
  <symbol id="i-wrench" viewBox="0 0 16 16"><path d="M4 4l6 6" stroke="#888" stroke-width="3"/><circle cx="3.500" cy="3.500" r="2.500" fill="none" stroke="#888" stroke-width="1.500"/><path d="M8 8.500l6.500 6" stroke="#7a6a22" stroke-width="4.500"/><path d="M8 8.500l6.500 6" stroke="#f0d96a" stroke-width="3"/></symbol>
  <symbol id="t-fav" viewBox="0 0 20 20"><path d="M10 .8l2.700 6.400 6.800.6-5.200 4.500 1.700 6.900-6-3.700-6 3.700 1.700-6.900L.5 7.800l6.800-.6z" fill="#fdf04a" stroke="#c8a100" stroke-width="1.200"/></symbol>
  <symbol id="t-fold" viewBox="0 0 20 20"><path d="M1.500 17.500v-15h8l2 2.500h7v12.500z" fill="#f0f0f0" stroke="#999" stroke-width="1.300"/></symbol>
  <symbol id="t-home" viewBox="0 0 20 20"><use href="#t-fold"/><path d="M5.500 10.500L10 6.500l4.500 4M7 10v5.500h6V10M9.500 15.500v-3h2v3" fill="none" stroke="#444" stroke-width="1.200"/></symbol>
  <symbol id="t-pg" viewBox="0 0 20 20"><path d="M1 3q3-3.500 7-1.500 5-2.500 8 0 4 .5 3 5-1 5-3.500 6l2.500.5q-2 2-4.500 1-.5 5.500-3.500 5.500T7 13l-3-1Q-.5 8 1 3z" fill="#6b98c9" stroke="#33516f"/><path d="M6 3q-2 6 1 10M14 3q2 6-1 10M9 5v5" fill="none" stroke="#33516f"/></symbol>
  <symbol id="t-hana" viewBox="0 0 20 20"><rect x="1" y="1" width="18" height="18" fill="none" stroke="#33516f" stroke-width="1.500" stroke-dasharray="2 2"/><rect x="4" y="4" width="12" height="12" fill="#6b98c9"/></symbol>
  <symbol id="t-ms" viewBox="0 0 20 20"><path d="M1 1q12 0 18 8Q6 11 1.500 18.500 7 10 1 1z" fill="#6b98c9" stroke="#33516f"/><path d="M6 2q4 5 1 10M10 3q3 5 0 8M14 5q2 3 0 5" fill="none" stroke="#33516f"/></symbol>
  <symbol id="t-ora" viewBox="0 0 20 20"><rect x="1" y="3.500" width="18" height="13" rx="5" fill="#6b98c9" stroke="#33516f" stroke-width="1.500"/></symbol>
  <symbol id="t-rast" viewBox="0 0 17 17"><rect width="17" height="17" fill="#a9c4e4"/><path d="M0 0h5.700v5.700H0zM11.300 0H17v5.700h-5.700zM5.700 5.700h5.600v5.600H5.700zM0 11.300h5.700V17H0z" fill="#33475c"/><path d="M11.300 11.300H17V17h-5.700z" fill="#f4f7fb"/></symbol>
  <symbol id="t-gdal" viewBox="0 0 20 20"><circle cx="12" cy="11" r="7.500" fill="#58bfe0"/><path d="M10 7l5 1-2 5-3-2z" fill="#5c9a3c"/><path d="M1 6l9-5M5 2l3 4 0 7" stroke="#555" stroke-width="1.600" fill="none"/><text x="0" y="19.500" font-size="8.500" font-weight="700" fill="#000" textLength="19" class="dv">GDAL</text></symbol>
  <symbol id="t-saga" viewBox="0 0 20 20"><path d="M17 4.500A9 9 0 1 0 19 10.500" fill="#fff" stroke="#1a5a9a" stroke-width="2.200"/><path d="M19 4.500H10L4 9.500l7 2.500h8.500M6 6l6 7h5q-2 4-5 5" fill="none" stroke="#1a5a9a" stroke-width="1.900"/></symbol>
  <symbol id="t-clock" viewBox="0 0 20 20"><circle cx="10" cy="10" r="8.800" fill="#f4f6f6" stroke="#888" stroke-width="1.300"/><path d="M10 3v7l4 3" stroke="#777" fill="none" stroke-width="1.200"/></symbol>
  <symbol id="dk-float" viewBox="0 0 11 11"><rect x=".5" y=".5" width="10" height="10" rx="2" fill="none" stroke="#666"/><path d="M4.500 2.500h4v4h-4zM2.500 4.500h4v4h-4z" fill="none" stroke="#555" stroke-width=".9"/></symbol>
  <symbol id="dk-close" viewBox="0 0 11 11"><rect x=".5" y=".5" width="10" height="10" rx="2" fill="none" stroke="#666"/><path d="M3 3l5 5M8 3L3 8" stroke="#444" stroke-width="1.700"/></symbol>
  <symbol id="search" viewBox="0 0 16 16"><circle cx="6.500" cy="6.500" r="5.500" fill="none" stroke="currentColor" stroke-width="1.300"/><path d="M10.500 10.500l5 5" stroke="currentColor" stroke-width="1.400"/></symbol>
  <symbol id="chk" viewBox="0 0 17 17"><rect x=".5" y=".5" width="16" height="16" fill="#fff" stroke="#b4b4b4"/><path d="M4 9.500l2.700 4L12.500 4" fill="none" stroke="#111" stroke-width="2"/></symbol>
</svg>

<div class="window">
  <header class="titlebar">
    <svg class="logo"><use href="#qgis"/></svg><span class="title">*Untitled Project — QGIS</span>
    <div class="winbtns">
      <svg viewBox="0 0 12 12"><path d="M0 5.500h11.500" stroke="#222"/></svg>
      <svg viewBox="0 0 12 12"><path d="M.5 3.500h8v8h-8zM3 3V1h8.500v8H9" fill="none" stroke="#222"/></svg>
      <svg viewBox="0 0 12 12"><path d="M.5.5l11 11M11.500.5l-11 11" stroke="#222"/></svg>
    </div>
  </header>
  <nav class="menubar"><span>Pro<u>j</u>ect</span><span><u>E</u>dit</span><span><u>V</u>iew</span><span><u>L</u>ayer</span><span><u>S</u>ettings</span><span><u>P</u>lugins</span><span>Vect<u>o</u>r</span><span><u>R</u>aster</span><span><u>D</u>atabase</span><span><u>W</u>eb</span><span><u>M</u>esh</span><span>Pro<u>c</u>essing</span><span><u>H</u>elp</span></nav>

  <div class="toolbar">
    <i class="grip first"></i>
    <svg class="t"><use href="#i-new"/></svg><svg class="t"><use href="#i-open"/></svg><svg class="t"><use href="#i-save"/></svg><svg class="t"><use href="#i-layout"/></svg><svg class="t"><use href="#i-laymgr"/></svg><svg class="t"><use href="#i-style"/></svg>
    <i class="grip"></i>
    <svg class="t on"><use href="#i-hand"/></svg><svg class="t off"><use href="#i-panSel"/></svg><svg class="t"><use href="#i-zin"/></svg><svg class="t"><use href="#i-zout"/></svg><svg class="t"><use href="#i-zfull"/></svg><svg class="t off"><use href="#i-zsel"/></svg><svg class="t"><use href="#i-zlay"/></svg><svg class="t"><use href="#i-z11"/></svg><svg class="t"><use href="#i-zlast"/></svg><svg class="t off"><use href="#i-znext"/></svg><svg class="t"><use href="#i-nmap"/></svg><svg class="t"><use href="#i-n3d"/></svg><svg class="t"><use href="#i-nbook"/></svg><svg class="t"><use href="#i-books"/></svg><svg class="t"><use href="#i-clock"/></svg><svg class="t"><use href="#i-refresh"/></svg>
    <i class="grip"></i>
    <svg class="t"><use href="#i-ident"/></svg><svg class="t off"><use href="#i-abacus"/></svg><svg class="t on"><use href="#i-gear"/></svg><svg class="t"><use href="#i-sigma"/></svg><svg class="t off"><use href="#i-table"/></svg><svg class="dd dim"><use href="#tri"/></svg><svg class="t"><use href="#i-measure"/></svg><svg class="dd"><use href="#tri"/></svg><svg class="t"><use href="#i-tip"/></svg><svg class="t off"><use href="#i-action"/></svg><svg class="dd dim"><use href="#tri"/></svg>
  </div>
  <div class="toolbar">
    <i class="grip first"></i>
    <svg class="t"><use href="#i-dsm"/></svg><svg class="t"><use href="#i-gpkg"/></svg><svg class="t"><use href="#i-shp"/></svg><svg class="t"><use href="#i-spl"/></svg><svg class="t"><use href="#i-mem"/></svg><svg class="t"><use href="#i-mesh"/></svg><svg class="t"><use href="#i-virt"/></svg>
    <i class="grip"></i>
    <svg class="t off"><use href="#i-pencils"/></svg><svg class="t off"><use href="#pencil"/></svg><svg class="t off"><use href="#i-savee"/></svg><svg class="t off"><use href="#i-line"/></svg><svg class="dd dim"><use href="#tri"/></svg><svg class="t off"><use href="#i-pts"/></svg><svg class="t off"><use href="#i-vert"/></svg><svg class="dd dim"><use href="#tri"/></svg><svg class="t off"><use href="#i-multi"/></svg><svg class="t off"><use href="#i-trash"/></svg><svg class="t off"><use href="#i-cut"/></svg><svg class="t off"><use href="#i-copy"/></svg><svg class="t off"><use href="#i-paste"/></svg><svg class="t off"><use href="#i-undo"/></svg><svg class="t off"><use href="#i-redo"/></svg>
    <i class="grip"></i>
    <svg class="t off"><use href="#tag"/></svg><svg class="t off"><use href="#i-diag"/></svg><i class="sep"></i><svg class="t"><use href="#i-tagpin"/></svg><svg class="t"><use href="#i-tagred"/></svg><i class="sep"></i><svg class="t off"><use href="#i-tagp"/></svg><svg class="t off"><use href="#i-tageye"/></svg><svg class="t off"><use href="#i-tagmv"/></svg><svg class="t off"><use href="#i-tagrot"/></svg><svg class="t off"><use href="#i-taged"/></svg>
    <i class="grip"></i><svg class="t"><use href="#i-db"/></svg>
    <i class="grip"></i><svg class="t"><use href="#i-grass"/></svg><svg class="t"><use href="#i-msearch"/></svg>
    <i class="grip"></i><svg class="t"><use href="#i-py"/></svg>
    <i class="grip"></i><svg class="t"><use href="#i-help"/></svg>
    <i class="grip"></i>
  </div>
  <div class="toolbar">
    <i class="grip first"></i>
    <svg class="t"><use href="#i-h1"/></svg><svg class="t"><use href="#i-h2"/></svg><svg class="t"><use href="#i-h"/></svg><svg class="t"><use href="#i-h4"/></svg><svg class="t"><use href="#i-sunu"/></svg><svg class="t"><use href="#i-sund"/></svg><svg class="t"><use href="#i-conu"/></svg><svg class="t"><use href="#i-cond"/></svg><svg class="t"><use href="#i-gamu"/></svg><svg class="t"><use href="#i-gamd"/></svg><svg class="t"><use href="#i-hcmgis"/></svg>
  </div>
  <div class="toolbar last">
    <i class="grip first"></i>
    <svg class="t off"><use href="#i-sel"/></svg><svg class="dd dim"><use href="#tri"/></svg><svg class="t off"><use href="#i-selv"/></svg><svg class="dd dim"><use href="#tri"/></svg><svg class="t"><use href="#i-desel"/></svg><svg class="dd"><use href="#tri"/></svg><svg class="t"><use href="#i-selloc"/></svg>
    <i class="grip"></i>
    <svg class="t off"><use href="#i-me1"/></svg><svg class="t off"><use href="#i-me2"/></svg><svg class="dd dim"><use href="#tri"/></svg><svg class="t off"><use href="#i-me3"/></svg><svg class="t off"><use href="#i-me4"/></svg><svg class="dd dim"><use href="#tri"/></svg>
    <i class="grip"></i>
    <svg class="t"><use href="#i-ann"/></svg><svg class="dd"><use href="#tri"/></svg><svg class="t"><use href="#i-annsel"/></svg><svg class="t"><use href="#i-poly"/></svg><svg class="t"><use href="#i-pline"/></svg><svg class="t"><use href="#i-star"/></svg><svg class="t"><use href="#i-txt"/></svg><i class="sep"></i><svg class="t"><use href="#i-callout"/></svg><svg class="dd"><use href="#tri"/></svg>
  </div>

  <main class="work">
    <aside class="left">
      <section class="browser">
        <div class="dockhead"><span>Browser</span><svg><use href="#dk-float"/></svg><svg><use href="#dk-close"/></svg></div>
        <div class="ptools"><svg><use href="#i-addp"/></svg><svg><use href="#i-refresh"/></svg><svg><use href="#i-filt"/></svg><svg><use href="#i-coll"/></svg><svg><use href="#i-info"/></svg></div>
        <div class="treebox">
          <ul class="tree">
            <li><b class="open"></b><svg><use href="#t-fav"/></svg>Favorites</li>
            <li class="child"><b></b><svg><use href="#t-fold"/></svg>D:\Spatial Thought QGis Learning\advanced_qgis</li>
            <li><b></b><svg><use href="#i-books"/></svg>Spatial Bookmarks</li>
            <li><b></b><svg><use href="#t-home"/></svg>Home</li>
            <li><b></b><svg><use href="#t-fold"/></svg>C:\ (OS)</li>
            <li><b></b><svg><use href="#t-fold"/></svg>D:\ (DATA)</li>
            <li><b class="none"></b><svg><use href="#i-gpkg0"/></svg>GeoPackage</li>
            <li><b class="none"></b><svg><use href="#i-feather"/></svg>SpatiaLite</li>
            <li><b class="none"></b><svg><use href="#t-pg"/></svg>PostgreSQL</li>
            <li><b class="none"></b><svg><use href="#t-hana"/></svg>SAP HANA</li>
            <li><b class="none"></b><svg><use href="#t-ms"/></svg>MS SQL Server</li>
            <li><b class="none"></b><svg><use href="#t-ora"/></svg>Oracle</li>
            <li><b class="none"></b><svg><use href="#globe"/></svg>WMS/WMTS</li>
          </ul>
          <div class="vscroll"><i class="btn"><b class="up"></b></i><i class="thumb"></i><i class="trough"></i><i class="btn"><b class="down"></b></i></div>
          <div class="hscroll"><i class="btn"><b class="lt"></b></i><i class="thumb"></i><i class="trough"></i><i class="btn"><b class="rt"></b></i></div>
          <div class="corner"></div>
        </div>
      </section>
      <div class="hsplit"><i></i></div>
      <section class="layers">
        <div class="dockhead"><span>Layers</span><svg><use href="#dk-float"/></svg><svg><use href="#dk-close"/></svg></div>
        <div class="ptools"><svg><use href="#i-brush"/></svg><svg><use href="#i-grp"/></svg><svg class="w"><use href="#i-eye"/></svg><svg class="w"><use href="#i-filt2"/></svg><svg class="off"><use href="#i-eps"/></svg><svg class="pdd"><use href="#tri"/></svg><svg><use href="#i-exp"/></svg><svg><use href="#i-coll"/></svg><svg><use href="#i-rem"/></svg></div>
        <div class="layerbox">
          <div class="lrow"><b class="open"></b><svg><use href="#chk"/></svg><svg class="ras"><use href="#t-rast"/></svg><strong>NDVI_Rempang2019</strong></div>
          <div class="band">Band 1: B8 (Gray)</div>
          <div class="ramp"><i></i><div><span>0.922224</span><span>-0.440568</span></div></div>
          <div class="lrow cur"><b class="open"></b><svg><use href="#chk"/></svg><svg class="ras"><use href="#t-rast"/></svg><strong>NDVI_Rempang2024</strong></div>
          <div class="band">Band 1: B8 (Gray)</div>
          <div class="ramp"><i></i><div><span>0.940343</span><span>-0.390525</span></div></div>
        </div>
        <div class="tabs"><span class="sel">Layers</span><span>Layer Order</span></div>
      </section>
    </aside>
    <div class="vsplit"></div>
    <section class="canvas">
      <div class="msgbar">
        <svg class="bub" viewBox="0 0 20 18"><path d="M2 .5h16q1.500 0 1.500 1.500v9.500q0 1.500-1.500 1.500H9l-4.500 4.500V13H2Q.5 13 .5 11.500V2Q.5.5 2 .5z" fill="#fbfbfb" stroke="#8a9aa8"/></svg>
        <span class="msg">An update to the MOLUSCE plugin is available</span>
        <button class="install">Install Updates...</button>
        <svg class="x" viewBox="0 0 20 20"><circle cx="10" cy="10" r="10" fill="#2e3134"/><path d="M6 6l8 8M14 6l-8 8" stroke="#fff" stroke-width="2.600"/></svg>
      </div>
      <svg class="map" viewBox="-207 -72 3171 2220" preserveAspectRatio="none">
        <defs>
          <filter id="ndvi" filterUnits="userSpaceOnUse" x="-207" y="-72" width="3171" height="2220" color-interpolation-filters="sRGB">
            <feGaussianBlur in="SourceGraphic" stdDeviation="12" result="base"/>
            <feTurbulence type="fractalNoise" baseFrequency="0.026" numOctaves="3" seed="7" result="t1"/>
            <feTurbulence type="fractalNoise" baseFrequency="0.085" numOctaves="3" seed="21" result="t2"/>
            <feComposite in="t1" in2="t2" operator="arithmetic" k2="0.700" k3="0.370" result="t"/>
            <feColorMatrix in="t" type="matrix" values="1 0 0 0 0  1 0 0 0 0  1 0 0 0 0  0 0 0 0 1" result="n"/>
            <feComposite in="base" in2="n" operator="arithmetic" k1="3.800" k2="-0.800" k3="0.550" k4="-0.400"/>
            <feComponentTransfer>
              <feFuncR type="table" tableValues="0.16 0.26 0.37 0.55 0.76 0.94 0.99"/>
              <feFuncG type="table" tableValues="0.62 0.66 0.72 0.80 0.89 0.95 0.90"/>
              <feFuncB type="table" tableValues="0.28 0.30 0.34 0.41 0.52 0.67 0.64"/>
              <feFuncA type="discrete" tableValues="1 1"/>
            </feComponentTransfer>
          </filter>
          <filter id="rough" filterUnits="userSpaceOnUse" x="-207" y="-72" width="3171" height="2220">
            <feTurbulence type="fractalNoise" baseFrequency="0.080" numOctaves="2" seed="3"/>
            <feDisplacementMap in="SourceGraphic" scale="18" xChannelSelector="R" yChannelSelector="G"/>
          </filter>
          <path id="mainland" d="M52 76L118 108 150 125 185 160 215 162 240 150 262 120 295 118 312 82 345 70 385 68 400 82 420 95 430 125 455 158 458 112 475 105 515 105 540 85 560 52 568 68 545 115 538 130 552 140 560 170 590 182 615 182 635 168 635 190 648 222 636 262 635 318 622 330 610 358 632 365 650 370 672 365 706 345 706 305 730 298 740 310 752 290 795 300 800 285 812 290 815 320 840 345 845 385 880 420 885 440 910 465 940 480 975 472 978 505 1000 530 1000 570 995 610 1000 635 985 640 1005 690 1000 712 975 708 940 712 950 750 962 800 955 835 940 865 920 868 935 882 955 875 975 850 985 810 1005 777 1030 780 1050 795 1070 790 1070 770 1090 760 1104 742 1120 775 1132 800 1160 815 1135 850 1118 882 1160 890 1165 925 1155 970 1140 1000 1118 1035 1102 1040 1128 1080 1115 1110 1112 1155 1132 1195 1150 1175 1170 1150 1200 1120 1205 1098 1245 1100 1280 1070 1310 1060 1330 1070 1332 1110 1322 1150 1305 1175 1345 1180 1380 1138 1395 1112 1435 1095 1465 1095 1480 1070 1530 1045 1600 1040 1655 1030 1700 1035 1760 1055 1800 1048 1815 1040 1850 1080 1865 1095 1935 1092 1945 1115 1965 1140 1995 1175 1980 1200 1982 1225 1965 1260 1990 1270 2045 1255 2110 1225 2170 1220 2190 1208 2215 1208 2225 1225 2280 1260 2295 1285 2318 1290 2300 1300 2285 1345 2265 1420 2240 1480 2248 1510 2230 1535 2195 1530 2180 1550 2150 1565 2110 1570 2075 1590 2062 1610 2040 1612 2062 1640 2065 1700 2068 1755 2040 1755 1985 1775 1935 1800 1900 1800 1895 1840 1870 1865 1810 1900 1740 1940 1690 1957 1675 1950 1665 1925 1560 1922 1540 1930 1520 1955 1522 2020 1480 2045 1440 2080 1400 2118 1360 2130 1330 2170 1135 2170 1110 2118 1100 2050 1090 2000 1075 1940 1062 1930 1068 1885 1050 1870 1048 1810 1030 1800 975 1800 980 1785 1005 1760 1005 1740 1018 1720 990 1650 970 1600 940 1550 912 1500 908 1430 902 1380 880 1335 830 1280 770 1245 700 1220 630 1222 580 1245 552 1240 552 1180 548 1130 545 1085 520 1065 490 1072 400 1050 330 1040 312 1060 305 1090 310 1110 292 1140 265 1135 240 1162 232 1150 250 1110 235 1075 252 1040 240 1005 222 985 240 960 238 900 230 840 212 815 218 740 222 650 240 600 245 520 260 485 245 440 215 410 180 375 150 350 108 345 100 320 75 300 62 270 75 255 110 240 130 220 132 160 110 140 90 125z"/>
          <path id="isles" d="M1020 490L1060 450 1080 430 1100 425 1140 385 1170 342 1215 338 1290 345 1325 370 1330 400 1300 425 1340 415 1390 415 1418 445 1400 490 1385 530 1385 565 1330 580 1285 590 1260 605 1250 630 1210 640 1150 625 1100 630 1080 650 1065 672 1055 630 1025 615 1020 550z
            M1343 362L1350 355 1392 340 1380 370 1360 384 1345 378z M878 346L895 348 902 380 885 372z M901 386L932 388 962 432 935 428 910 417z M998 436L1017 433 1012 443z M1288 1025L1310 1000 1335 982 1365 1020 1345 1068 1310 1055 1290 1040z"/>
          <clipPath id="coast"><use href="#mainland"/><use href="#isles"/></clipPath>
        </defs>
        <g filter="url(#rough)">
        <g clip-path="url(#coast)">
          <!-- vegetation index: darker grey = denser vegetation -->
          <g filter="url(#ndvi)">
            <rect x="-207" y="-72" width="3171" height="2220" fill="#646464"/>
            <g fill="#303030">
              <path d="M260 120L400 70 430 180 330 200 300 290 260 240zM130 160l40 10 90 110-40 20-80-80zM500 340l110-10 20 50-90 10zM520 120l90 60 30 20-10 130-60-20zM700 300l110-10 30 90-60 80-90-60zM780 440l120 30 80 60-60 40-110-40zM250 490l80 0 120 250-30 10-90-150-90-80zM430 930l60-110 40 50-60 80zM500 920l180 30 60 110-130 40-90-60zM780 630l160 90 20 120-100-40-90-90zM1000 780h160l-30 100-110 60-70-40zM870 340l100 0 0 100-100 0zM980 420l50 0 0 30-50 0zM1270 980l110 0 0 100-110 0zM240 780l50 0 10 150-50 0z"/>
              <path d="M1030 480l140-140 160 30 90 70-40 130-230 60-40-80zM1130 1180l200-120-20 110-60 90 0 90-110-30zM1430 1100l80-60 140 0 10 60-100 60zM1550 1200l400-40 30 70-120 120-300-80zM1290 1560h80v200l-60 20zM1690 1560l160-60 40 260 160-70 20 70-200 90-360 80 0-90 130-60zM1940 1560l80-80 60 100-20 60zM1900 1280l200-50 40 50-160 70zM1600 1700l60-40 20 60-60 30zM1000 1200l110 0 30 120-90 40zM1330 330l80 0 0 60-80 0zM2100 1230l120-20 60 50-80 20z"/>
              <path d="M1350 2000l100-40 60 80-110 70zM1000 1400l60 0 20 100-60 40zM640 1100l100 0 160 100 0 120-200-110zM1100 1780l120 0 40 80-100 20zM1240 1420l60 0 40 140-60 20zM1400 1200l140 20 60 80-120 40z"/>
            </g>
            <g fill="#828282">
              <path d="M380 270l200-60 40 60-130 60zM180 200l60 20 60 80-50 20zM290 380l170-60 140 120 160 60-20 120-180-20-210-60zM560 520l190 20-20 160-110-30zM260 620l200 60-30 130-160-20zM390 860l120 10-80 60zM850 920l120-20 60 100-60 60zM1040 450l80 20 0 40-70-20zM1200 1200l90 0 40 60-90 0zM1500 1080l200 100-20 60-120-60zM1750 1260l200-30-50 100-100 40z"/>
              <path d="M1480 1330l200-40 120 200-150 70-140-60zM1360 1560l120 30-20 140-100-20zM1940 1380l300-60 0 120-200 60zM1100 1300l180 40 20 120-160 10zM1000 1780l200-80 60 40-80 160-160-40zM1500 1730l200-20-20 90-200 20zM1080 1950l200-40 40 220-200 20zM1880 1650l100-40 80 60-100 30z"/>
            </g>
            <path d="M1740 1290l60-10 80-60 60-5-20 40-50 100-30 10-30-60-60 10zM325 1000l150-10 20 40-120 0zM1370 1600l60 0 40 80-60 60zM1500 1750l90-10 20 60-80 10zM820 760l60 0 20 60-50 20zM300 280l80-10 20 60-80 0z" fill="#a4a4a4"/>
          </g>
          <g fill="#fdd29c" opacity=".9">
            <path d="M325 945l30-8 10 30-20 25-30-25zM600 380l45 0-3 30-8 10 8 35-12 5-5 20-4-40-8-10zM370 580l25-8 10 25-20 10zM430 1015l25-10 10 25zM1000 1030l25-10 10 20-30 5zM575 1110l25-15 15 40 10 20-30 60-35-5 8-50zM95 255l30-8-5 18zM1000 1400l30 0 20 35-30 10zM1580 1045l25 10-15 30zM1560 1480l15 0-5 50 5 20-12 20zM2010 1560l25-10 8 20-25 5zM1790 1260l20-15 10 30 40-15-20 30-50-5zM890 480l12-4 6 10-14 8zM870 500l12 2 4 10-14 4zM118 108l30 5-5 20-25-8z"/>
            <path d="M1165 1700l30-15 12 12 15-6-8 26-12 34-22-6-12-20zM1030 1740l40-20 20-60 15 0-20 80-35 40-10 60-60-10 10-40zM1330 1950l12 0-20 110-12 0z" fill="#fcbf88"/>
          </g>
          <g fill="none" stroke="#f2f0ac" stroke-width="5" opacity=".85">
            <path d="M520 510l60 140 60 90 100 80 90 100 100 150 70 150 80 90 90 80 80 120 60 130 50 160 0 40-50 120-80 110M545 1085l80-20 60-10 20-50 60-70 30-10 60-20M360 945l60-20 50-80M460 940l80-70 80-40 80-30M720 810l80 50 60 0 20 30M1385 1140l90 20 50 20 50-20M1680 1280l30-60-20-60M1570 1360l-5 200M2120 1260l-20 100M990 1350l120-60M1490 1900l60 20 50 0"/>
          </g>
          <g fill="none" stroke="#fbc08c" stroke-width="6">
            <path d="M262 485q40-10 50 30t30 40-15 30 40 25M458 110l8 80-15 25M860 635q20 10 25 55l60 20M620 835l20 15 40-30M1255 1240q0-30 50-60M1870 1190h50l60-25M1900 1350q10-50 60-70M1820 1620q40 80 10 100t50 10 20 60M250 145l5 90M1255 405l20-5 15 22 30-5" />
          </g>
          <g fill="#fb9a5b"><path d="M1285 1235L1322 1235 1325 1300 1338 1310 1325 1340 1335 1380 1333 1440 1312 1445 1305 1410 1295 1390 1285 1355 1265 1375 1245 1415 1230 1442 1220 1435 1250 1380 1270 1355 1272 1315 1245 1305 1260 1285 1258 1250zM244 140l10 0 2 40-10-6zM885 690l60 10-8 12-48-8zM1965 1160l30 15-12 25zM1940 1280l25-20 2 15-22 10zM1880 1725l12 0 10 75-15 0z"/></g>
          <path d="M560 1235L590 1226 640 1216 700 1218 765 1244 820 1276 862 1318 885 1350" fill="none" stroke="#fb9f62" stroke-width="24"/>
          <path d="M545 1085L520 1065 490 1072 400 1050 330 1040M240 1005L222 985 240 960 238 900 230 840 212 815 218 740 222 650M260 485L245 440 215 410 180 375 150 350 108 345 100 320 75 300 62 270M1075 1940L1062 1930 1068 1885 1050 1870 1048 1810 1030 1800 975 1800 1005 1760 1018 1720 970 1600 940 1550 912 1500 908 1430 902 1380 880 1335M552 1235L552 1180 545 1085M1850 1080L1865 1095 1935 1092 1945 1115 1995 1175M2280 1260L2318 1290 2300 1300 2265 1420 2240 1480M1695 1955L1740 1940M1560 1922L1540 1930" fill="none" stroke="#fbb277" stroke-width="9" stroke-dasharray="60 14 30 10"/>
          <use href="#mainland" fill="none" stroke="#f6d79a" stroke-width="6" stroke-dasharray="26 30 8 22" opacity=".85"/>
        </g>
        </g>
      </svg>
    </section>
    <aside class="right">
      <div class="dockhead"><span>Processing Toolbox</span><svg><use href="#dk-float"/></svg><svg><use href="#dk-close"/></svg></div>
      <div class="ptools"><svg class="w"><use href="#i-gears"/></svg><svg class="w"><use href="#i-py2"/></svg><svg><use href="#t-clock"/></svg><svg><use href="#i-doc"/></svg><i></i><svg class="off"><use href="#i-edres"/></svg><i></i><svg><use href="#i-wrench"/></svg></div>
      <div class="searchbox"><svg><use href="#search"/></svg>Search...</div>
      <ul class="tree algs">
        <li><b></b><svg><use href="#t-clock"/></svg>Recently used</li>
        <li><b></b><svg><use href="#qgis"/></svg>Cartography</li>
        <li><b></b><svg><use href="#qgis"/></svg>Database</li>
        <li><b></b><svg><use href="#qgis"/></svg>File tools</li>
        <li><b></b><svg><use href="#qgis"/></svg>GPS</li>
        <li><b></b><svg><use href="#qgis"/></svg>Interpolation</li>
        <li><b></b><svg><use href="#qgis"/></svg>Layer tools</li>
        <li><b></b><svg><use href="#qgis"/></svg>Mesh</li>
        <li><b></b><svg><use href="#qgis"/></svg>Network analysis</li>
        <li><b></b><svg><use href="#qgis"/></svg>Plots</li>
        <li><b></b><svg><use href="#qgis"/></svg>Raster analysis</li>
        <li><b></b><svg><use href="#qgis"/></svg>Raster creation</li>
        <li><b></b><svg><use href="#qgis"/></svg>Raster terrain analysis</li>
        <li><b></b><svg><use href="#qgis"/></svg>Raster tools</li>
        <li><b></b><svg><use href="#qgis"/></svg>Vector analysis</li>
        <li><b></b><svg><use href="#qgis"/></svg>Vector creation</li>
        <li><b></b><svg><use href="#qgis"/></svg>Vector general</li>
        <li><b></b><svg><use href="#qgis"/></svg>Vector geometry</li>
        <li><b></b><svg><use href="#qgis"/></svg>Vector overlay</li>
        <li><b></b><svg><use href="#qgis"/></svg>Vector selection</li>
        <li><b></b><svg><use href="#qgis"/></svg>Vector table</li>
        <li><b></b><svg><use href="#qgis"/></svg>Vector tiles</li>
        <li><b></b><svg><use href="#t-gdal"/></svg>GDAL</li>
        <li><b></b><svg><use href="#t-saga"/></svg>SAGA</li>
      </ul>
      <div class="tipbar">You can add more algorithms to the toolbox, <a>enable additional<br>providers.</a> <a class="cl">[close]</a></div>
    </aside>
  </main>

  <footer class="status">
    <div class="locate"><svg><use href="#search"/></svg>Type to locate (Ctrl+K)</div>
    <span class="lab coord">Coordinate</span><span class="field c1">0.8907°,104.2244°</span>
    <svg class="mouse" viewBox="0 0 20 20"><path d="M1 5q2-4 6-3l7 10-6 5Q1 12 1 5z" fill="#111"/><path d="M5 4l5 9M8 3l4 7" stroke="#fff" stroke-width="1.500"/><circle cx="12" cy="14" r="5" fill="#fff" stroke="#111" stroke-width="2"/><circle cx="12" cy="14" r="1.600"/><path d="M14 4l4-3M16 8h3M2 15l-2-2" stroke="#111" stroke-width="1.500" stroke-dasharray="1.500 1.500"/></svg>
    <span class="lab scale">Scale</span><span class="field combo">1:129535<i><svg><use href="#tri"/></svg></i></span>
    <svg class="lock" viewBox="0 0 16 20"><path d="M3.500 10V6a4.500 4.500 0 0 1 9 0v4" fill="none" stroke="#888" stroke-width="2.500"/><path d="M3.500 10V6a4.500 4.500 0 0 1 9 0v4" fill="none" stroke="#ddd" stroke-width=".8"/><rect y="9.500" width="16" height="10" rx="1" fill="#666"/></svg>
    <span class="lab mag">Magnifier</span><span class="field spin s1">100%<i><svg class="flip"><use href="#tri"/></svg><svg><use href="#tri"/></svg></i></span>
    <span class="lab rot">Rotation</span><span class="field spin s2">0.0 °<i><svg class="flip"><use href="#tri"/></svg><svg><use href="#tri"/></svg></i></span>
    <svg class="chk"><use href="#chk"/></svg><span class="lab ren">Render</span>
    <svg class="crs" viewBox="0 0 20 18"><ellipse cx="10" cy="9" rx="9" ry="8.500" fill="#777"/><path d="M0 9h20M3 4.500h14M3 13.500h14M10 .5v17M6 1q-4 8 0 16M14 1q4 8 0 16" stroke="#eee" fill="none" stroke-width=".9"/></svg><span class="lab epsg">EPSG:4326</span>
    <svg class="log" viewBox="0 0 20 19"><ellipse cx="10" cy="8" rx="10" ry="8" fill="#666"/><path d="M11 14l6 4.500V12z" fill="#666"/></svg>
  </footer>
</div>

<div class="taskbar">
  <svg class="start" viewBox="0 0 30 30"><path d="M1 0h13.300v14.300H0V1q0-1 1-1zM15.700 0H29q1 0 1 1v13.300H15.700zM0 15.700h14.300V30H1q-1 0-1-1zM15.700 15.700H30V29q0 1-1 1H15.700z" fill="url(#gwin)"/></svg>
  <div class="pill"><svg><use href="#search"/></svg><span>Search</span>
    <svg class="cake" viewBox="0 0 54 30"><path d="M22 12L38 3l16 4-4 12-14 9-12-4z" fill="#c8853f"/><path d="M22 12l16 3-3 13-13-4z" fill="#f0cfa0"/><path d="M0 22l14-5 10 8-10 4q-10 1-14-7z" fill="#eec08a" stroke="#b8763a"/><g fill="#d43a3a"><circle cx="34" cy="3" r="3"/><circle cx="40" cy="3.500" r="2.500"/><circle cx="27" cy="17" r="1.500"/><circle cx="31" cy="21" r="1.500"/><circle cx="12" cy="22" r="1.500"/></g><path d="M20 9q3-5 9-1-4 4-9 1zM41 7q5 0 6 4-5 1-6-4z" fill="#2f9b48"/><g fill="#e8a030"><circle cx="25" cy="21" r="1.200"/><circle cx="32" cy="17" r="1.200"/><circle cx="7" cy="22" r="1.200"/></g></svg>
  </div>
  <div class="apps">
    <div class="app"><svg viewBox="0 0 30 30"><rect x="7" y="1" width="22" height="20" rx="1.500" fill="#f2f2f2"/><rect x="0" y="9" width="21" height="20" rx="1.500" fill="#777" fill-opacity=".85"/></svg></div>
    <div class="app"><svg viewBox="0 0 30 30"><path d="M10 1h9q3 0 4 4l1 4h-6q-3 0-4 3l-3 10q-1 4-5 4-6 0-6-7Q2 3 10 1z" fill="url(#gcopA)"/><path d="M20 29h-9q-3 0-4-4h5q3 0 4-3l3-10q1-4 5-4 6 0 6 7-2 13-10 14z" fill="url(#gcopB)"/></svg></div>
    <div class="app"><svg viewBox="0 0 30 30"><circle cx="17" cy="6" r="4.500" fill="#7b83eb"/><circle cx="25" cy="8" r="3.300" fill="#5059c9"/><path d="M10 12h13v10q0 6-6.500 6T10 22z" fill="#7b83eb"/><path d="M23 12h7v8q0 5-6 5z" fill="#5059c9"/><rect x="0" y="8" width="15" height="15" rx="1.500" fill="#464eb8"/><path d="M4 12h7M7.500 12v8" stroke="#fff" stroke-width="2"/></svg><em>1</em></div>
    <div class="app"><svg viewBox="0 0 30 30"><path d="M15 0C24 0 30 7 30 13q0 6-8 7-4 0-3-2 2-4-2-7T2 10Q6 0 15 0z" fill="url(#gedge)"/><path d="M2 10q8-6 15 1-5-1-6 5 0 9 9 10 4 0 7-2-5 6-12 6Q0 29 0 15z" fill="#1b74c5"/><circle cx="7.500" cy="22" r="7.500" fill="#d4d4d4"/><circle cx="7.500" cy="20" r="2.800" fill="#8a8a8a"/><path d="M3 27q0-4 4.500-4t4.500 4z" fill="#8a8a8a"/></svg></div>
    <div class="app"><svg viewBox="0 0 30 30"><path d="M0 4q0-2 2-2h7l3 3h16v10H0z" fill="#e2a21a"/><rect y="6" width="30" height="22" rx="1.500" fill="#fdcb44"/><path d="M5 28v-6q0-2 2-2h16q2 0 2 2v6z" fill="#1a7fd0"/><path d="M10 24h10" stroke="#0b4e86" stroke-width="1.500"/></svg><i></i></div>
    <div class="app"><svg viewBox="0 0 30 30"><circle cx="15" cy="15" r="14.500" fill="#1ed760"/><path d="M6.500 10.500q9-2.500 17 2M7.500 15.500q8-2 14.500 1.800M8.500 20q6.500-1.500 12 1.500" fill="none" stroke="#122" stroke-width="2.600" stroke-linecap="round"/></svg><i></i></div>
    <div class="app"><svg viewBox="0 0 30 30"><circle cx="15" cy="15" r="14.500" fill="#fbc116"/><path d="M15 15L2.400 7.700A14.500 14.500 0 0 0 13 29.400l6-9.500z" fill="#2da94f"/><path d="M2.400 7.700A14.500 14.500 0 0 1 27.600 7.700H15L9 18.500z" fill="#e94335"/><circle cx="15" cy="15" r="6.800" fill="#fff"/><circle cx="15" cy="15" r="5.300" fill="#4285f4"/></svg><em class="r">R</em><i></i></div>
    <div class="app"><svg viewBox="0 0 30 30"><rect x="4" y="2" width="22" height="25" rx="1.500" fill="#4cc3e0"/><rect x="4" y="26" width="22" height="3" fill="#b5652a"/><path d="M4 26h22" stroke="#eee" stroke-width="1.500"/><path d="M7 0v4M11 0v4M15 0v4M19 0v4M23 0v4" stroke="#1a6f90" stroke-width="1.500"/><path d="M8.500 9h13M8.500 14h13M8.500 19h9" stroke="#13506e" stroke-width="2"/></svg><i></i></div>
    <div class="app act"><svg viewBox="0 0 24 24"><use href="#qgis-dark"/></svg><i></i></div>
    <div class="app"><svg viewBox="0 0 30 30"><path d="M2 28l2-7a12.500 12.500 0 1 1 5 5z" fill="none" stroke="#2bd366" stroke-width="3"/><path d="M10 9l3-1 2 5-2 2q2 4 5 5l2-2 4 2-1 3q-3 2-8-1-7-5-5-13z" fill="#fff"/></svg><em class="wide">89</em><i></i></div>
    <div class="app"><svg viewBox="0 0 30 30"><path d="M22 0l7 3v24l-7 3L8 17l-6 5-2-1.500V9.500L2 8l6 5z" fill="#1f8ad2"/><path d="M22 0l7 3v24l-7 3z" fill="#3aa7f0"/><path d="M22 8.500L12 15l10 6.500z" fill="#17283a"/><path d="M2.500 12v6l3-3z" fill="#17283a"/></svg><i></i></div>
  </div>
  <div class="weather"><svg viewBox="0 0 30 28"><circle cx="15" cy="15" r="13" fill="url(#gsun)"/><path d="M3 11q-3 0-3-3t3-3q1-4 5-4t5 4q4 0 4 3t-3 3z" fill="#9fbdf2"/><path d="M15 26q-3 0-3-3t3-3q1-5 5.500-5t5 5q4 0 4 3t-3 3z" fill="#a9c4f8"/></svg><div><span>88°F</span><span class="sub">Partly sunny</span></div></div>
  <div class="tray">
    <svg class="chev" viewBox="0 0 14 9"><path d="M1 8l6-6 6 6" fill="none" stroke="#fff" stroke-width="1.700"/></svg>
    <svg class="cloud" viewBox="0 0 20 17"><path d="M4 13q-4 0-4-4t4-4q2-5 6.500-5T17 5q3 1 3 4t-3 4z" fill="#b9bcc0"/><path d="M4 13q-4 0-4-4t4-4q4 0 6 4l6 4z" fill="#e8eaec"/><circle cx="14.500" cy="11.500" r="5.300" fill="#fff"/><circle cx="14.500" cy="11.500" r="4.500" fill="#1d78c8"/><path d="M12 11q1-3 4-1.500M17 12q-1 3-4 1.500" fill="none" stroke="#fff" stroke-width="1.300"/></svg>
    <span class="lang">ENG</span>
    <svg class="wifi" viewBox="0 0 20 16"><path d="M1 6q9-9 18 0M4 9q6-6 12 0M7 12q3-3 6 0" fill="none" stroke="#fff" stroke-width="1.500"/><circle cx="10" cy="14" r="1.600" fill="#fff"/></svg>
    <svg class="vol" viewBox="0 0 20 16"><path d="M1 5.500h3L9 1v14l-5-4.500H1z" fill="none" stroke="#fff" stroke-width="1.300"/><path d="M11.500 5q2 3 0 6M14 3q3.500 5 0 10" fill="none" stroke="#fff" stroke-width="1.300"/><path d="M16.500 1q5 7 0 14" fill="none" stroke="#667" stroke-width="1.300"/></svg>
    <svg class="bat" viewBox="0 0 20 17"><path d="M7 4h9.500q1.500 0 1.500 1.500v7q0 1.500-1.500 1.500H2.500Q1 14 1 12.500V11" fill="none" stroke="#fff" stroke-width="1.500"/><path d="M18 7.500h2v3h-2z" fill="#fff"/><path d="M4 12V9l2-3h4v6z" fill="#fff"/><path d="M4 0L0 6h3l-1 4 5-6H4z" fill="#fff"/></svg>
    <div class="clock"><span>11:17:18 AM</span><span>12/22/2024</span></div>
    <svg class="bell" viewBox="0 0 16 19"><path d="M8 0q6 0 6 6.500V11l2 4H0l2-4V6.500Q2 0 8 0zM5.500 16h5q-.5 2.500-2.500 2.500T5.500 16z" fill="#fc9c80"/></svg>
  </div>
</div>
</body>
</html>
```
FILE: styles.css
```css
* { box-sizing: border-box; }
html, body { margin: 0; padding: 0; }
body {
  width: 1918px; height: 1078px; overflow: hidden;
  font-family: "Open Sans", "Noto Sans", sans-serif;
  font-size: 14.5px; letter-spacing: -0.33px; color: #000; background: #efefef;
}
i { font-style: normal; display: block; }
ul { list-style: none; margin: 0; padding: 0; }
svg { display: block; flex: none; }
.grads { position: absolute; width: 0; height: 0; }
.defs { display: none; }
.dv { font-family: "DejaVu Sans", sans-serif; letter-spacing: -0.5px; }
.sf { font-family: "Liberation Serif", serif; letter-spacing: 0; }

.window { height: 1020px; display: flex; flex-direction: column; }

.titlebar { height: 29px; flex: none; background: #eff4f9; display: flex; align-items: center; padding-left: 2px; }
.logo { width: 20px; height: 20px; }
.title { margin-left: 6px; font-size: 14.5px; letter-spacing: -0.12px; }
.winbtns { margin-left: auto; display: flex; gap: 46px; padding-right: 24px; }
.winbtns svg { width: 12px; height: 12px; }

.menubar { height: 25px; flex: none; display: flex; align-items: center; padding-left: 4px; background: #f0f0f0; border-bottom: 1px solid #d4d4d4; letter-spacing: -0.22px; }
.menubar span { padding: 0 7.5px; }
.menubar u { text-underline-offset: 2px; }

.toolbar { height: 39px; flex: none; display: flex; align-items: center; background: linear-gradient(#fafafa, #eeeeee); border-bottom: 1px solid #b4b4b4; }
.toolbar.last { height: 38px; }
.t { width: 31px; height: 32px; margin: 0 1px; padding: 3px 3px; border: 1px solid transparent; border-radius: 2px; }
.t.on { background: #dadada; border-color: #a3a3a3; }
.off { opacity: .4; filter: grayscale(.6); }
.grip { width: 18px; height: 18px; flex: none; background: radial-gradient(circle, #a8a8a8 .7px, transparent 1px) 9px 0 / 3px 3px repeat; background-clip: content-box; padding: 0 4px 0 9.500px; }
.grip.first { width: 14px; padding: 0 4px 0 5.500px; }
.dd { width: 15px; height: 6px; padding: 0 4px 0 1px; fill: #4a4a4a; overflow: visible; }
.dd.dim { fill: #a2a2a2; }
.sep { width: 8px; height: 20px; flex: none; border-left: 1px solid #cfcfcf; margin-left: 4px; margin-right: -4px; }

.work { flex: 1; display: flex; min-height: 0; }
.left { width: 403px; display: flex; flex-direction: column; }
.dockhead { height: 22px; display: flex; align-items: center; padding-left: 4px; font-size: 15px; }
.dockhead span { flex: 1; }
.dockhead svg { width: 11px; height: 11px; margin-left: 3px; margin-top: -1px; }
.left .dockhead { padding-right: 2px; }
.ptools { display: flex; align-items: center; height: 26px; padding-left: 8px; gap: 10px; }
.ptools svg { width: 15px; height: 15px; }
.ptools .w { width: 17px; margin-right: -2px; }

.treebox { margin-top: 3px; height: 307px; border: 1px solid #b4b4b4; background: #fff; display: grid; grid-template: 1fr 17px / 1fr 17px; overflow: hidden; }
.tree { overflow: hidden; min-height: 0; min-width: 0; letter-spacing: -0.18px; }
.tree li { display: flex; align-items: center; height: 22px; padding-left: 4px; white-space: nowrap; }
.tree li.child { padding-left: 21px; }
.tree b, .lrow b { width: 8px; height: 10px; flex: none; background: #555; clip-path: polygon(20% 0, 85% 50%, 20% 100%); }
.tree b.open, .lrow b.open { width: 9px; height: 6px; clip-path: polygon(0 0, 100% 0, 50% 100%); margin-right: -1px; }
.tree b.none { visibility: hidden; }
.tree svg { width: 19px; height: 19px; margin: 0 7px 0 8px; }
.vscroll { display: flex; flex-direction: column; border-left: 1px solid #b4b4b4; }
.btn { width: 17px; height: 17px; flex: none; background: #fbfbfb; display: flex; align-items: center; justify-content: center; }
.btn b { width: 9px; height: 5px; background: #444; }
.vscroll .btn { width: 16px; }
.up { clip-path: polygon(50% 0, 100% 100%, 0 100%); }
.down { clip-path: polygon(0 0, 100% 0, 50% 100%); }
.btn .lt, .btn .rt { width: 5px; height: 9px; }
.lt { clip-path: polygon(100% 0, 100% 100%, 0 50%); }
.rt { clip-path: polygon(0 0, 100% 50%, 0 100%); }
.vscroll .thumb { height: 101px; background: linear-gradient(90deg, #fff, #f0f0f0); border: solid #b4b4b4; border-width: 1px 0; }
.trough { flex: 1; background: #e3e3e3; }
.vscroll .btn:last-child { border-top: 1px solid #b4b4b4; }
.hscroll { display: flex; border-top: 1px solid #b4b4b4; min-width: 0; }
.hscroll .thumb { width: 345px; background: linear-gradient(#fff, #f0f0f0); border: solid #b4b4b4; border-width: 0 1px; }
.hscroll .btn:last-child { border-left: 1px solid #b4b4b4; }
.corner { border: solid #b4b4b4; border-width: 1px 0 0 1px; background: #efefef; }

.hsplit { height: 6px; display: flex; justify-content: center; padding-top: 2px; }
.hsplit i { width: 17px; height: 1px; background: repeating-linear-gradient(90deg, #aaa 0 1px, transparent 1px 3px); }
.pdd { fill: #a2a2a2; }
.ptools .pdd { width: 9px; height: 6px; margin: 0 -1px 0 -2px; }
.layerbox { margin-top: 3px; height: 333px; border: 1px solid #b4b4b4; background: #fff; padding-top: 1px; }
.lrow { display: flex; align-items: center; height: 22px; padding-left: 8px; }
.lrow svg { width: 17px; height: 17px; margin-left: 12px; }
.lrow .ras { margin-left: 8px; }
.lrow strong { margin-left: 7px; font-weight: 700; font-size: 15px; letter-spacing: -0.1px; }
.lrow.cur { background: #efefef; }
.cur strong { text-decoration: underline; text-underline-offset: 2px; }
.band { height: 20px; line-height: 21px; padding-left: 53px; letter-spacing: -.25px; }
.ramp { display: flex; height: 104px; padding: 0 0 2px 53px; }
.ramp i { width: 17px; background: linear-gradient(#1a9641, #a6d96a 25%, #ffffc0 50%, #fdae61 75%, #d7191c); }
.ramp div { display: flex; flex-direction: column; justify-content: space-between; padding: 1px 0 0 5px; margin-bottom: -3px; font-size: 12.5px; letter-spacing: 0; line-height: 18px; }
.tabs { margin-top: 1px; border-top: 1px solid #b4b4b4; display: flex; align-items: flex-start; font-size: 12.8px; letter-spacing: -.2px; }
.tabs span { width: 97px; height: 27px; line-height: 28px; text-align: center; border: solid #b0b0b0; border-width: 0 1px 1px 0; background: #dcdcdc; border-radius: 0 0 3px 3px; }
.tabs .sel { width: 68px; height: 29px; line-height: 31px; background: #fafafa; border-left-width: 1px; }

.vsplit { width: 7px; }
.canvas { width: 1059px; border: 1px solid #b4b4b4; background: #fff; margin-top: 1px; display: flex; flex-direction: column; height: 778px; }
.msgbar { height: 35px; flex: none; background: #e5f4fe; border-bottom: 1px solid #b7cfe4; display: flex; align-items: center; color: #2a57a5; font-size: 12.5px; letter-spacing: -.12px; }
.bub { width: 20px; height: 18px; margin-left: 12px; }
.msg { margin-left: 13px; flex: 1; }
.install { width: 104px; height: 24px; border: 1px solid #aaa; border-radius: 2px; background: linear-gradient(#fff, #f2f2f2); font: 12.5px "Open Sans", sans-serif; letter-spacing: -.1px; padding: 0; color: #000; white-space: nowrap; }
.x { width: 20px; height: 20px; margin: 0 23px 0 35px; }
.map { width: 1057px; height: 741px; }

.right { flex: 1; display: flex; flex-direction: column; margin-left: 7px; min-width: 0; height: 779px; }
.right .dockhead { padding-left: 4px; }
.right .ptools i { width: 1px; height: 12px; background: #ccc; margin: 0 -1px; }
.searchbox { margin-top: 3px; height: 26px; background: #fff; border: 1px solid #b4b4b4; border-right: 0; border-radius: 3px 0 0 0; display: flex; align-items: center; color: #777; font-size: 13.5px; letter-spacing: -.2px; padding-left: 9px; }
.searchbox svg { width: 15px; height: 15px; margin-right: 9px; color: #888; }
.algs { flex: 1; background: #fff; border-left: 1px solid #b4b4b4; border-bottom: 1px solid #b4b4b4; padding-top: 1px; letter-spacing: -.28px; }
.algs li { padding-left: 8px; }
.algs svg { width: 18px; height: 18px; margin: 0 8px 0 13px; }
.tipbar { height: 36px; background: #55aaff; border: 1px solid #2a74c0; border-right: 0; color: #fff; font-size: 12.5px; letter-spacing: -.13px; line-height: 16px; padding: 2px 0 0 4px; }
.tipbar a { color: #0000ee; text-decoration: underline; }
.cl { margin-left: 9px; }

.status { height: 33px; flex: none; display: flex; align-items: center; font-size: 12.8px; letter-spacing: -.25px; border-bottom: 1px solid #ccc; }
.locate { width: 232px; height: 26px; margin: 1px 0 0 4px; border: 1px solid #b0b0b0; border-radius: 3px; background: #fff; display: flex; align-items: center; color: #777; padding-left: 10px; letter-spacing: -.1px; }
.locate svg { width: 15px; height: 15px; margin-right: 9px; color: #888; }
.lab, .field { white-space: nowrap; }
.lab { padding-top: 3px; }
.field { height: 25px; border: 1px solid #b0b0b0; border-radius: 3px; background: #fff; display: flex; align-items: center; padding: 1px 0 0 5px; letter-spacing: -.02px; }
.coord { width: 65px; margin-left: 770px; }
.c1 { width: 122px; padding-left: 6px; }
.mouse { width: 20px; height: 20px; margin: 0 13px 0 5px; }
.scale { width: 34px; padding-top: 1px; }
.combo { width: 93px; padding-left: 3px; }
.combo i, .spin i { margin-left: auto; height: 100%; width: 25px; background: #f4f4f4; display: flex; align-items: center; justify-content: center; fill: #555; }
.combo svg { width: 9px; height: 6px; }
.spin i { width: 17px; border-left: 1px solid #c4c4c4; flex-direction: column; gap: 3px; }
.spin svg { width: 9px; height: 6px; }
.flip { transform: rotate(180deg); }
.lock { width: 16px; height: 20px; margin: 0 9px 0 12px; }
.mag { width: 56px; }
.s1 { width: 92px; }
.rot { width: 56px; margin-left: 10px; }
.s2 { width: 89px; }
.chk { width: 17px; height: 17px; margin-left: 6px; }
.ren { width: 56px; margin-left: 6px; padding-top: 2px; }
.crs { width: 20px; height: 18px; }
.epsg { width: 88px; margin-left: 2px; }
.log { width: 20px; height: 19px; margin-top: 1px; }

.taskbar { height: 58px; background: linear-gradient(90deg, #15202c, #18303e 20%, #182b3a 55%, #202b35 68%, #1a2936 85%, #182632); display: flex; align-items: center; padding-left: 26px; color: #fff; letter-spacing: -.25px; border-top: 1px solid #2d3b46; }
.start { width: 29px; height: 29px; margin-top: 2px; }
.pill { width: 275px; height: 40px; margin-left: 17px; border-radius: 20px; background: linear-gradient(90deg, #333b48, #34485a 45%, #394855); border: 1px solid #4a5762; display: flex; align-items: center; padding: 0 9px 0 14px; font-size: 16px; color: #d4d8dc; }
.pill svg { width: 18px; height: 18px; color: #e6e6e6; }
.pill span { flex: 1; margin-left: 13px; }
.pill .cake { width: 54px; height: 30px; }
.apps { display: flex; margin-left: 5px; gap: 5px; }
.app { width: 50px; height: 50px; display: grid; place-items: center; position: relative; border-radius: 4px; }
.app svg { width: 30px; height: 30px; }
.act { background: #26343f; border: 1px solid #303e49; }
.app i { position: absolute; bottom: 0; left: 21px; width: 8px; height: 3px; border-radius: 2px; background: #9aa0a6; }
.act i { left: 14px; width: 20px; background: #f58264; }
.app em { position: absolute; top: 3px; right: 4px; width: 20px; height: 20px; border-radius: 10px; background: #f27c62; color: #111; font-style: normal; font-size: 13px; line-height: 20px; text-align: center; }
.app em.r { background: #5a3c33; color: #ddd; font-size: 11px; }
.app em.wide { right: 1px; width: 25px; font-size: 14px; }
.weather { display: flex; align-items: center; margin-left: 394px; gap: 9px; font-size: 14.5px; }
.weather svg { width: 30px; height: 28px; }
.weather span { display: block; line-height: 20px; }
.weather .sub { color: #c2c8cc; letter-spacing: -.2px; }
.tray { display: flex; align-items: center; margin-left: auto; padding-right: 24px; font-size: 14.5px; }
.chev { width: 14px; height: 9px; }
.cloud { width: 20px; height: 17px; margin: 0 24px 0 23px; }
.lang { width: 51px; }
.wifi { width: 20px; height: 16px; }
.vol { width: 20px; height: 16px; margin: 0 10px; }
.bat { width: 20px; height: 17px; }
.clock { width: 104px; text-align: right; line-height: 20px; margin-right: 11px; letter-spacing: -.1px; }
.clock span { display: block; }
.bell { width: 17px; height: 20px; }
```
